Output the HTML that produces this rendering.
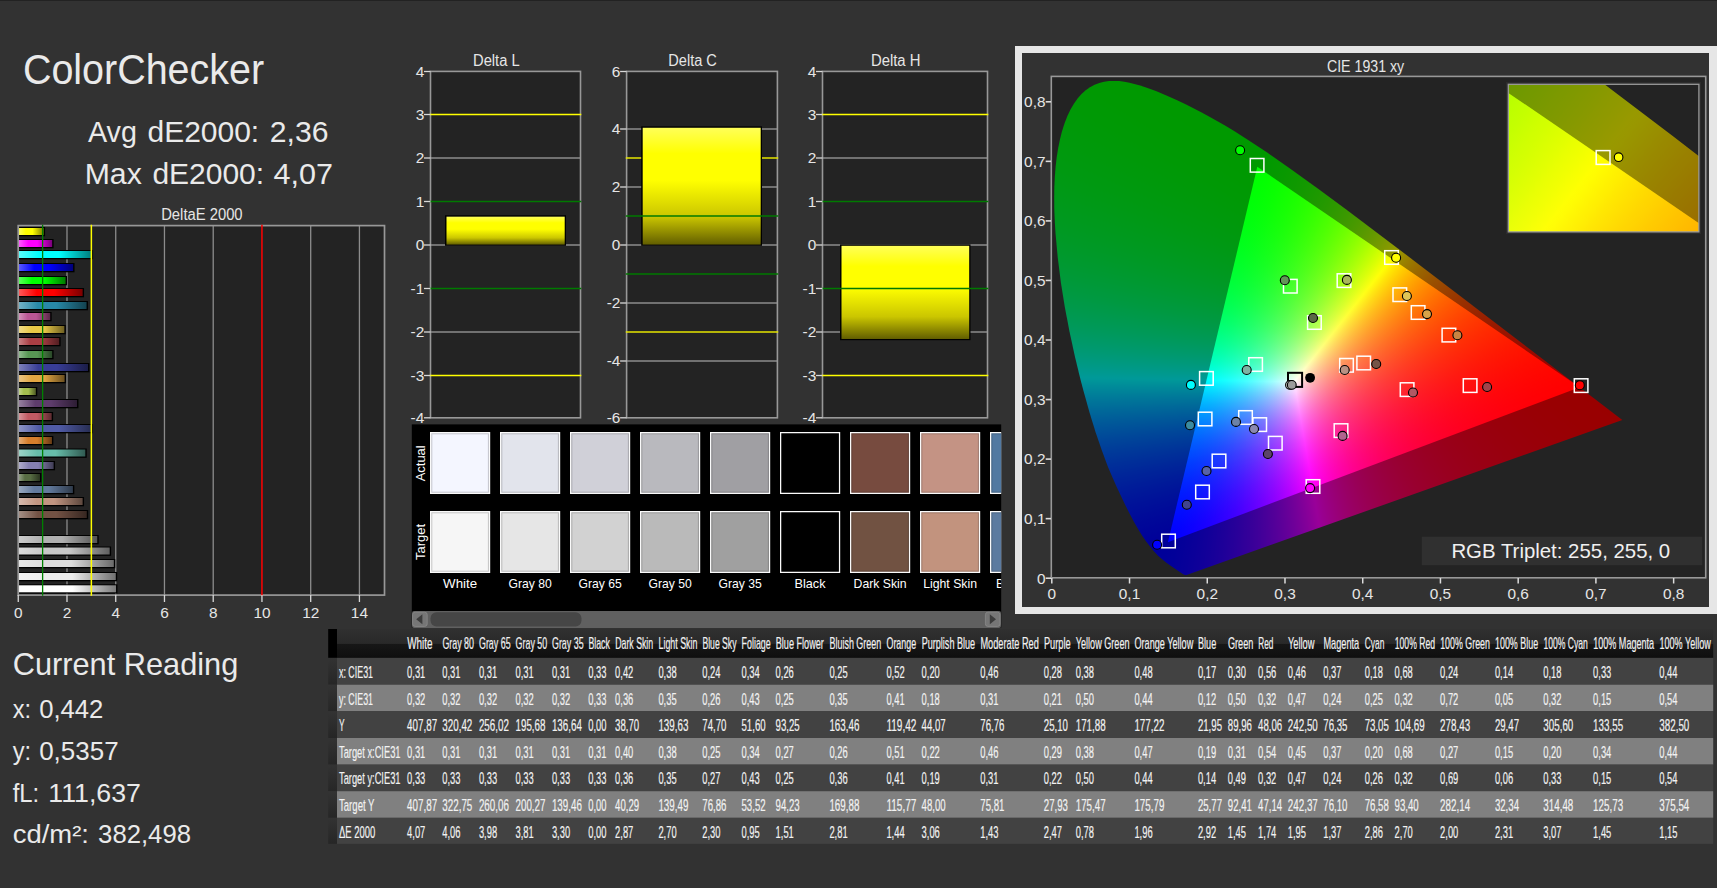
<!DOCTYPE html>
<html><head><meta charset="utf-8"><title>ColorChecker</title>
<style>
html,body{margin:0;padding:0}
body{width:1717px;height:888px;overflow:hidden;background:#323232;position:relative;font-family:"Liberation Sans", sans-serif}
.a{position:absolute}
svg text{font-family:"Liberation Sans", sans-serif}
</style></head><body>
<div class="a" style="left:0;top:0;width:1717px;height:1px;background:#222"></div>
<div class="a" style="left:1015px;top:46px;width:702px;height:568px;box-sizing:border-box;border:7px solid #e6e6e6;border-right-width:8px"></div>
<div class="a" style="left:1051px;top:76px;width:655px;height:502px;background:#232323;overflow:hidden"><div class="a" style="left:0;top:0;width:100%;height:100%;background:conic-gradient(from 0deg at 528.80px 311.28px,#ffff00 0deg,#ffff00 69.3deg,#ff0000 69.4deg,#ff0000 124.3deg,#ff00ff 124.4deg,#ff00ff 249.6deg,#ff01ff 249.8deg,#ff01ff 250deg,#ff02ff 250.2deg,#ff02ff 250.4deg,#ff04ff 250.8deg,#ff06ff 251.3deg,#ff0eff 252.9deg,#ff12ff 253.6deg,#ff15ff 254deg,#ff16ff 254.2deg,#ff19ff 254.6deg,#ff1aff 254.8deg,#ff1fff 255.5deg,#ff23ff 256deg,#ff26ff 256.4deg,#ff28ff 256.6deg,#ff29ff 256.8deg,#ff2eff 257.3deg,#ff2fff 257.5deg,#ff38ff 258.4deg,#ff39ff 258.6deg,#ff43ff 259.6deg,#ff46ff 259.8deg,#ff4fff 260.7deg,#ff52ff 260.9deg,#ff56ff 261.3deg,#ff59ff 261.5deg,#ff5cff 261.8deg,#ff5fff 262deg,#ff61ff 262.2deg,#ff64ff 262.4deg,#ff69ff 262.8deg,#ff6cff 263deg,#ff75ff 263.7deg,#ff8fff 265.4deg,#ff97ff 265.9deg,#ffa3ff 266.6deg,#ffacff 267.1deg,#ffafff 267.3deg,#ffbbff 267.9deg,#ffbeff 268.1deg,#ffd2ff 269.1deg,#ffd7ff 269.3deg,#ffe1ff 269.8deg,#ffe6ff 270deg,#ffeaff 270.2deg,#ffefff 270.4deg,#fffdff 271deg,#fffffe 271.1deg,#fffffa 271.3deg,#fffff5 271.5deg,#ffffec 271.9deg,#ffffe8 272.1deg,#ffffe3 272.3deg,#ffffc9 273.6deg,#ffffc6 273.8deg,#ffffc0 274.1deg,#ffffbd 274.3deg,#ffffb9 274.5deg,#ffffb6 274.7deg,#ffffae 275.2deg,#ffff9c 276.4deg,#ffff95 276.9deg,#ffff8c 277.6deg,#ffff86 278.1deg,#ffff80 278.6deg,#ffff7a 279.1deg,#ffff73 279.8deg,#ffff70 280deg,#ffff67 280.9deg,#ffff66 281.1deg,#ffff5c 282.1deg,#ffff5b 282.3deg,#ffff57 282.7deg,#ffff56 282.9deg,#ffff52 283.3deg,#ffff51 283.5deg,#ffff4f 283.7deg,#ffff4e 283.9deg,#ffff4c 284.1deg,#ffff4b 284.3deg,#ffff49 284.5deg,#ffff48 284.7deg,#ffff44 285.2deg,#ffff43 285.4deg,#ffff3e 286.1deg,#ffff3c 286.5deg,#ffff38 287.1deg,#ffff37 287.3deg,#ffff33 288deg,#ffff23 291.2deg,#ffff20 291.9deg,#ffff1d 292.6deg,#ffff1b 293.1deg,#ffff1a 293.5deg,#ffff18 293.9deg,#ffff17 294.3deg,#ffff16 294.5deg,#ffff15 294.9deg,#ffff14 295.1deg,#ffff13 295.5deg,#ffff12 295.7deg,#ffff11 296.1deg,#ffff10 296.3deg,#ffff0f 296.8deg,#ffff0e 297deg,#ffff0d 297.4deg,#ffff0c 297.8deg,#ffff0b 298.2deg,#ffff0a 298.4deg,#ffff0a 298.6deg,#ffff09 298.8deg,#ffff09 299.1deg,#ffff08 299.3deg,#ffff08 299.5deg,#ffff07 299.7deg,#ffff07 300deg,#ffff06 300.2deg,#ffff06 300.4deg,#ffff05 300.6deg,#ffff05 300.9deg,#ffff04 301.1deg,#ffff04 301.5deg,#ffff03 301.7deg,#ffff03 302.1deg,#ffff02 302.3deg,#ffff02 302.8deg,#ffff01 303deg,#ffff01 303.6deg,#ffff00 303.8deg,#ffff00 360deg),conic-gradient(from 0deg at 206.26px 90.76px,#00ff00 0deg,#00ff00 13.3deg,#ffff00 13.4deg,#ffff00 125.3deg,#ffff01 125.5deg,#ffff01 126.5deg,#ffff02 126.7deg,#ffff02 127.4deg,#ffff03 127.6deg,#ffff03 128.3deg,#ffff04 128.5deg,#ffff04 129.1deg,#ffff05 129.3deg,#ffff05 129.8deg,#ffff06 130deg,#ffff06 130.5deg,#ffff07 130.7deg,#ffff07 131.1deg,#ffff08 131.3deg,#ffff08 131.8deg,#ffff09 132deg,#ffff09 132.3deg,#ffff0a 132.5deg,#ffff0a 132.9deg,#ffff0b 133.1deg,#ffff0b 133.5deg,#ffff0c 133.7deg,#ffff0c 134deg,#ffff0d 134.2deg,#ffff0d 134.5deg,#ffff0e 134.7deg,#ffff0e 135deg,#ffff0f 135.2deg,#ffff0f 135.5deg,#ffff10 135.7deg,#ffff10 136deg,#ffff11 136.2deg,#ffff11 136.5deg,#ffff12 136.7deg,#ffff12 136.9deg,#ffff13 137.1deg,#ffff13 137.4deg,#ffff14 137.6deg,#ffff14 137.8deg,#ffff15 138deg,#ffff15 138.2deg,#ffff16 138.4deg,#ffff16 138.6deg,#ffff17 138.8deg,#ffff17 139deg,#ffff18 139.2deg,#ffff18 139.4deg,#ffff19 139.6deg,#ffff19 139.8deg,#ffff1a 140deg,#ffff1a 140.2deg,#ffff1b 140.4deg,#ffff1c 140.8deg,#ffff1d 141.3deg,#ffff1e 141.5deg,#ffff1f 141.9deg,#ffff20 142.3deg,#ffff21 142.5deg,#ffff22 143deg,#ffff23 143.2deg,#ffff24 143.6deg,#ffff25 143.8deg,#ffff26 144.2deg,#ffff27 144.4deg,#ffff28 144.8deg,#ffff29 145deg,#ffff2b 145.7deg,#ffff2c 145.9deg,#ffff2e 146.4deg,#ffff2f 146.8deg,#ffff31 147.2deg,#ffff33 147.7deg,#ffff35 148.2deg,#ffff37 148.7deg,#ffff3a 149.4deg,#ffff3d 150.1deg,#ffff4e 153.5deg,#ffff52 154.2deg,#ffff56 154.9deg,#ffff59 155.4deg,#ffff5e 156.1deg,#ffff60 156.5deg,#ffff65 157.2deg,#ffff6a 157.9deg,#ffff6e 158.4deg,#ffff6f 158.6deg,#ffff71 158.8deg,#ffff72 159deg,#ffff75 159.3deg,#ffff76 159.5deg,#ffff79 159.8deg,#ffff7a 160deg,#ffff7f 160.5deg,#ffff80 160.7deg,#ffff88 161.5deg,#ffff89 161.7deg,#ffff97 163.1deg,#ffff9a 163.3deg,#ffffa2 164.1deg,#ffffa5 164.3deg,#ffffa9 164.7deg,#ffffac 164.9deg,#ffffae 165.1deg,#ffffb1 165.3deg,#ffffb3 165.5deg,#ffffb6 165.7deg,#ffffbb 166.1deg,#ffffbe 166.3deg,#ffffc8 167deg,#ffffd1 167.6deg,#ffffd9 168.1deg,#ffffe1 168.6deg,#ffffe5 168.8deg,#ffffe8 169deg,#ffffec 169.2deg,#ffffef 169.4deg,#ffffff 170.2deg,#f6ffff 170.7deg,#e6ffff 171.5deg,#e3ffff 171.7deg,#dbffff 172.1deg,#d8ffff 172.3deg,#d4ffff 172.5deg,#d1ffff 172.7deg,#cdffff 172.9deg,#caffff 173.1deg,#c3ffff 173.5deg,#c0ffff 173.7deg,#b9ffff 174.1deg,#b3ffff 174.5deg,#a5ffff 175.4deg,#9fffff 175.8deg,#92ffff 176.7deg,#8bffff 177.2deg,#82ffff 177.9deg,#7fffff 178.1deg,#7affff 178.5deg,#77ffff 178.7deg,#75ffff 178.9deg,#72ffff 179.1deg,#70ffff 179.3deg,#6dffff 179.5deg,#6affff 179.8deg,#67ffff 180deg,#64ffff 180.3deg,#61ffff 180.5deg,#5cffff 181deg,#59ffff 181.2deg,#4fffff 182.2deg,#4cffff 182.4deg,#3dffff 183.9deg,#3cffff 184.1deg,#32ffff 185.1deg,#31ffff 185.3deg,#2cffff 185.8deg,#2bffff 186deg,#27ffff 186.4deg,#26ffff 186.6deg,#23ffff 186.9deg,#22ffff 187.1deg,#20ffff 187.3deg,#1fffff 187.5deg,#1dffff 187.7deg,#1cffff 187.9deg,#18ffff 188.4deg,#17ffff 188.6deg,#13ffff 189.2deg,#12ffff 189.4deg,#0effff 190deg,#0cffff 190.4deg,#05ffff 191.8deg,#03ffff 192.3deg,#02ffff 192.7deg,#01ffff 192.9deg,#00ffff 193.4deg,#00ffff 304.3deg,#00ff00 304.4deg,#00ff00 360deg),conic-gradient(from 0deg at 116.88px 466.24px,#00ffff 0deg,#00ffff 13.7deg,#01ffff 13.9deg,#01ffff 14.2deg,#02ffff 14.4deg,#02ffff 14.6deg,#03ffff 14.8deg,#05ffff 15.5deg,#06ffff 15.7deg,#08ffff 16.3deg,#09ffff 16.5deg,#0bffff 17deg,#18ffff 19.6deg,#1bffff 20.1deg,#1effff 20.6deg,#21ffff 21.1deg,#24ffff 21.5deg,#25ffff 21.7deg,#28ffff 22.1deg,#2bffff 22.5deg,#2cffff 22.7deg,#2effff 22.9deg,#2fffff 23.1deg,#31ffff 23.3deg,#32ffff 23.5deg,#35ffff 23.8deg,#36ffff 24deg,#39ffff 24.3deg,#3affff 24.5deg,#3fffff 25deg,#40ffff 25.2deg,#49ffff 26.1deg,#4affff 26.3deg,#59ffff 27.8deg,#5cffff 28deg,#64ffff 28.8deg,#67ffff 29deg,#6bffff 29.4deg,#6effff 29.6deg,#71ffff 29.9deg,#74ffff 30.1deg,#76ffff 30.3deg,#79ffff 30.5deg,#7fffff 31deg,#85ffff 31.4deg,#8dffff 32deg,#93ffff 32.4deg,#9cffff 33deg,#a7ffff 33.7deg,#aeffff 34.1deg,#b1ffff 34.3deg,#b8ffff 34.7deg,#c1ffff 35.2deg,#c4ffff 35.4deg,#d0ffff 36deg,#d3ffff 36.2deg,#e3ffff 37deg,#e8ffff 37.2deg,#f2ffff 37.7deg,#f7ffff 37.9deg,#fbffff 38.1deg,#feffff 38.2deg,#fffcff 38.4deg,#fff1ff 38.9deg,#ffedff 39.1deg,#ffe8ff 39.3deg,#ffd6ff 40.2deg,#ffd3ff 40.4deg,#ffcbff 40.8deg,#ffc8ff 41deg,#ffc4ff 41.2deg,#ffc1ff 41.4deg,#ffbdff 41.6deg,#ffbaff 41.8deg,#ffb2ff 42.3deg,#ffa0ff 43.5deg,#ff99ff 44deg,#ff90ff 44.7deg,#ff8dff 44.9deg,#ff8bff 45.1deg,#ff88ff 45.3deg,#ff86ff 45.5deg,#ff83ff 45.7deg,#ff7fff 46.1deg,#ff7cff 46.3deg,#ff76ff 46.9deg,#ff73ff 47.1deg,#ff5fff 49.1deg,#ff5eff 49.3deg,#ff57ff 50deg,#ff56ff 50.2deg,#ff52ff 50.6deg,#ff51ff 50.8deg,#ff4eff 51.1deg,#ff4dff 51.3deg,#ff4aff 51.6deg,#ff49ff 51.8deg,#ff47ff 52deg,#ff46ff 52.2deg,#ff44ff 52.4deg,#ff43ff 52.6deg,#ff3fff 53.1deg,#ff3eff 53.3deg,#ff3bff 53.7deg,#ff3aff 53.9deg,#ff36ff 54.5deg,#ff35ff 54.7deg,#ff32ff 55.2deg,#ff2fff 55.7deg,#ff2bff 56.4deg,#ff1eff 59deg,#ff1aff 59.9deg,#ff18ff 60.4deg,#ff16ff 60.9deg,#ff14ff 61.4deg,#ff13ff 61.8deg,#ff11ff 62.2deg,#ff10ff 62.6deg,#ff0fff 62.8deg,#ff0eff 63.2deg,#ff0dff 63.4deg,#ff0bff 64.1deg,#ff0aff 64.5deg,#ff09ff 64.7deg,#ff09ff 64.9deg,#ff08ff 65.1deg,#ff08ff 65.3deg,#ff07ff 65.5deg,#ff06ff 65.9deg,#ff06ff 66.1deg,#ff05ff 66.3deg,#ff05ff 66.5deg,#ff04ff 66.7deg,#ff04ff 67deg,#ff03ff 67.2deg,#ff03ff 67.5deg,#ff02ff 67.7deg,#ff02ff 68deg,#ff01ff 68.2deg,#ff01ff 68.8deg,#ff00ff 69deg,#ff00ff 193.3deg,#0000ff 193.4deg,#0000ff 249.3deg,#00ffff 249.4deg,#00ffff 360deg);background-blend-mode:darken;clip-path:polygon(135.6px 499.0px,134.0px 499.1px,132.2px 498.3px,120.0px 490.1px,115.1px 486.5px,110.2px 482.6px,106.8px 479.5px,102.9px 475.3px,100.0px 471.7px,95.0px 465.2px,91.4px 459.9px,87.5px 453.7px,83.3px 446.5px,78.8px 438.1px,73.9px 428.3px,65.7px 411.0px,59.8px 397.5px,56.7px 390.2px,50.7px 374.1px,44.6px 356.3px,38.6px 336.7px,32.6px 315.3px,29.6px 304.0px,23.9px 280.5px,18.6px 256.0px,13.8px 231.0px,9.8px 205.9px,6.7px 181.1px,4.5px 157.0px,3.8px 145.3px,3.3px 133.8px,3.2px 122.6px,3.3px 111.7px,3.8px 101.2px,4.6px 91.0px,5.7px 81.3px,7.2px 72.0px,9.0px 63.2px,11.1px 54.9px,13.6px 47.2px,16.4px 40.0px,19.5px 33.6px,22.9px 27.7px,26.6px 22.5px,30.5px 18.0px,34.7px 14.3px,39.0px 11.2px,43.6px 8.8px,48.3px 7.0px,53.1px 5.7px,58.0px 5.1px,63.1px 4.9px,68.2px 5.1px,73.3px 5.8px,78.5px 6.8px,89.1px 9.6px,94.3px 11.3px,104.9px 15.1px,115.4px 19.4px,125.6px 24.0px,135.6px 28.7px,150.2px 36.2px,159.8px 41.4px,174.0px 49.6px,183.5px 55.3px,197.5px 64.2px,216.2px 76.6px,239.3px 92.7px,267.1px 112.7px,294.9px 133.3px,354.5px 178.3px,571.3px 343.9px);filter:brightness(.6)"></div><div class="a" style="left:0;top:0;width:100%;height:100%;background:conic-gradient(from 0deg at 528.80px 311.28px,#ffff00 0deg,#ffff00 69.3deg,#ff0000 69.4deg,#ff0000 124.3deg,#ff00ff 124.4deg,#ff00ff 249.6deg,#ff01ff 249.8deg,#ff01ff 250deg,#ff02ff 250.2deg,#ff02ff 250.4deg,#ff04ff 250.8deg,#ff06ff 251.3deg,#ff0eff 252.9deg,#ff12ff 253.6deg,#ff15ff 254deg,#ff16ff 254.2deg,#ff19ff 254.6deg,#ff1aff 254.8deg,#ff1fff 255.5deg,#ff23ff 256deg,#ff26ff 256.4deg,#ff28ff 256.6deg,#ff29ff 256.8deg,#ff2eff 257.3deg,#ff2fff 257.5deg,#ff38ff 258.4deg,#ff39ff 258.6deg,#ff43ff 259.6deg,#ff46ff 259.8deg,#ff4fff 260.7deg,#ff52ff 260.9deg,#ff56ff 261.3deg,#ff59ff 261.5deg,#ff5cff 261.8deg,#ff5fff 262deg,#ff61ff 262.2deg,#ff64ff 262.4deg,#ff69ff 262.8deg,#ff6cff 263deg,#ff75ff 263.7deg,#ff8fff 265.4deg,#ff97ff 265.9deg,#ffa3ff 266.6deg,#ffacff 267.1deg,#ffafff 267.3deg,#ffbbff 267.9deg,#ffbeff 268.1deg,#ffd2ff 269.1deg,#ffd7ff 269.3deg,#ffe1ff 269.8deg,#ffe6ff 270deg,#ffeaff 270.2deg,#ffefff 270.4deg,#fffdff 271deg,#fffffe 271.1deg,#fffffa 271.3deg,#fffff5 271.5deg,#ffffec 271.9deg,#ffffe8 272.1deg,#ffffe3 272.3deg,#ffffc9 273.6deg,#ffffc6 273.8deg,#ffffc0 274.1deg,#ffffbd 274.3deg,#ffffb9 274.5deg,#ffffb6 274.7deg,#ffffae 275.2deg,#ffff9c 276.4deg,#ffff95 276.9deg,#ffff8c 277.6deg,#ffff86 278.1deg,#ffff80 278.6deg,#ffff7a 279.1deg,#ffff73 279.8deg,#ffff70 280deg,#ffff67 280.9deg,#ffff66 281.1deg,#ffff5c 282.1deg,#ffff5b 282.3deg,#ffff57 282.7deg,#ffff56 282.9deg,#ffff52 283.3deg,#ffff51 283.5deg,#ffff4f 283.7deg,#ffff4e 283.9deg,#ffff4c 284.1deg,#ffff4b 284.3deg,#ffff49 284.5deg,#ffff48 284.7deg,#ffff44 285.2deg,#ffff43 285.4deg,#ffff3e 286.1deg,#ffff3c 286.5deg,#ffff38 287.1deg,#ffff37 287.3deg,#ffff33 288deg,#ffff23 291.2deg,#ffff20 291.9deg,#ffff1d 292.6deg,#ffff1b 293.1deg,#ffff1a 293.5deg,#ffff18 293.9deg,#ffff17 294.3deg,#ffff16 294.5deg,#ffff15 294.9deg,#ffff14 295.1deg,#ffff13 295.5deg,#ffff12 295.7deg,#ffff11 296.1deg,#ffff10 296.3deg,#ffff0f 296.8deg,#ffff0e 297deg,#ffff0d 297.4deg,#ffff0c 297.8deg,#ffff0b 298.2deg,#ffff0a 298.4deg,#ffff0a 298.6deg,#ffff09 298.8deg,#ffff09 299.1deg,#ffff08 299.3deg,#ffff08 299.5deg,#ffff07 299.7deg,#ffff07 300deg,#ffff06 300.2deg,#ffff06 300.4deg,#ffff05 300.6deg,#ffff05 300.9deg,#ffff04 301.1deg,#ffff04 301.5deg,#ffff03 301.7deg,#ffff03 302.1deg,#ffff02 302.3deg,#ffff02 302.8deg,#ffff01 303deg,#ffff01 303.6deg,#ffff00 303.8deg,#ffff00 360deg),conic-gradient(from 0deg at 206.26px 90.76px,#00ff00 0deg,#00ff00 13.3deg,#ffff00 13.4deg,#ffff00 125.3deg,#ffff01 125.5deg,#ffff01 126.5deg,#ffff02 126.7deg,#ffff02 127.4deg,#ffff03 127.6deg,#ffff03 128.3deg,#ffff04 128.5deg,#ffff04 129.1deg,#ffff05 129.3deg,#ffff05 129.8deg,#ffff06 130deg,#ffff06 130.5deg,#ffff07 130.7deg,#ffff07 131.1deg,#ffff08 131.3deg,#ffff08 131.8deg,#ffff09 132deg,#ffff09 132.3deg,#ffff0a 132.5deg,#ffff0a 132.9deg,#ffff0b 133.1deg,#ffff0b 133.5deg,#ffff0c 133.7deg,#ffff0c 134deg,#ffff0d 134.2deg,#ffff0d 134.5deg,#ffff0e 134.7deg,#ffff0e 135deg,#ffff0f 135.2deg,#ffff0f 135.5deg,#ffff10 135.7deg,#ffff10 136deg,#ffff11 136.2deg,#ffff11 136.5deg,#ffff12 136.7deg,#ffff12 136.9deg,#ffff13 137.1deg,#ffff13 137.4deg,#ffff14 137.6deg,#ffff14 137.8deg,#ffff15 138deg,#ffff15 138.2deg,#ffff16 138.4deg,#ffff16 138.6deg,#ffff17 138.8deg,#ffff17 139deg,#ffff18 139.2deg,#ffff18 139.4deg,#ffff19 139.6deg,#ffff19 139.8deg,#ffff1a 140deg,#ffff1a 140.2deg,#ffff1b 140.4deg,#ffff1c 140.8deg,#ffff1d 141.3deg,#ffff1e 141.5deg,#ffff1f 141.9deg,#ffff20 142.3deg,#ffff21 142.5deg,#ffff22 143deg,#ffff23 143.2deg,#ffff24 143.6deg,#ffff25 143.8deg,#ffff26 144.2deg,#ffff27 144.4deg,#ffff28 144.8deg,#ffff29 145deg,#ffff2b 145.7deg,#ffff2c 145.9deg,#ffff2e 146.4deg,#ffff2f 146.8deg,#ffff31 147.2deg,#ffff33 147.7deg,#ffff35 148.2deg,#ffff37 148.7deg,#ffff3a 149.4deg,#ffff3d 150.1deg,#ffff4e 153.5deg,#ffff52 154.2deg,#ffff56 154.9deg,#ffff59 155.4deg,#ffff5e 156.1deg,#ffff60 156.5deg,#ffff65 157.2deg,#ffff6a 157.9deg,#ffff6e 158.4deg,#ffff6f 158.6deg,#ffff71 158.8deg,#ffff72 159deg,#ffff75 159.3deg,#ffff76 159.5deg,#ffff79 159.8deg,#ffff7a 160deg,#ffff7f 160.5deg,#ffff80 160.7deg,#ffff88 161.5deg,#ffff89 161.7deg,#ffff97 163.1deg,#ffff9a 163.3deg,#ffffa2 164.1deg,#ffffa5 164.3deg,#ffffa9 164.7deg,#ffffac 164.9deg,#ffffae 165.1deg,#ffffb1 165.3deg,#ffffb3 165.5deg,#ffffb6 165.7deg,#ffffbb 166.1deg,#ffffbe 166.3deg,#ffffc8 167deg,#ffffd1 167.6deg,#ffffd9 168.1deg,#ffffe1 168.6deg,#ffffe5 168.8deg,#ffffe8 169deg,#ffffec 169.2deg,#ffffef 169.4deg,#ffffff 170.2deg,#f6ffff 170.7deg,#e6ffff 171.5deg,#e3ffff 171.7deg,#dbffff 172.1deg,#d8ffff 172.3deg,#d4ffff 172.5deg,#d1ffff 172.7deg,#cdffff 172.9deg,#caffff 173.1deg,#c3ffff 173.5deg,#c0ffff 173.7deg,#b9ffff 174.1deg,#b3ffff 174.5deg,#a5ffff 175.4deg,#9fffff 175.8deg,#92ffff 176.7deg,#8bffff 177.2deg,#82ffff 177.9deg,#7fffff 178.1deg,#7affff 178.5deg,#77ffff 178.7deg,#75ffff 178.9deg,#72ffff 179.1deg,#70ffff 179.3deg,#6dffff 179.5deg,#6affff 179.8deg,#67ffff 180deg,#64ffff 180.3deg,#61ffff 180.5deg,#5cffff 181deg,#59ffff 181.2deg,#4fffff 182.2deg,#4cffff 182.4deg,#3dffff 183.9deg,#3cffff 184.1deg,#32ffff 185.1deg,#31ffff 185.3deg,#2cffff 185.8deg,#2bffff 186deg,#27ffff 186.4deg,#26ffff 186.6deg,#23ffff 186.9deg,#22ffff 187.1deg,#20ffff 187.3deg,#1fffff 187.5deg,#1dffff 187.7deg,#1cffff 187.9deg,#18ffff 188.4deg,#17ffff 188.6deg,#13ffff 189.2deg,#12ffff 189.4deg,#0effff 190deg,#0cffff 190.4deg,#05ffff 191.8deg,#03ffff 192.3deg,#02ffff 192.7deg,#01ffff 192.9deg,#00ffff 193.4deg,#00ffff 304.3deg,#00ff00 304.4deg,#00ff00 360deg),conic-gradient(from 0deg at 116.88px 466.24px,#00ffff 0deg,#00ffff 13.7deg,#01ffff 13.9deg,#01ffff 14.2deg,#02ffff 14.4deg,#02ffff 14.6deg,#03ffff 14.8deg,#05ffff 15.5deg,#06ffff 15.7deg,#08ffff 16.3deg,#09ffff 16.5deg,#0bffff 17deg,#18ffff 19.6deg,#1bffff 20.1deg,#1effff 20.6deg,#21ffff 21.1deg,#24ffff 21.5deg,#25ffff 21.7deg,#28ffff 22.1deg,#2bffff 22.5deg,#2cffff 22.7deg,#2effff 22.9deg,#2fffff 23.1deg,#31ffff 23.3deg,#32ffff 23.5deg,#35ffff 23.8deg,#36ffff 24deg,#39ffff 24.3deg,#3affff 24.5deg,#3fffff 25deg,#40ffff 25.2deg,#49ffff 26.1deg,#4affff 26.3deg,#59ffff 27.8deg,#5cffff 28deg,#64ffff 28.8deg,#67ffff 29deg,#6bffff 29.4deg,#6effff 29.6deg,#71ffff 29.9deg,#74ffff 30.1deg,#76ffff 30.3deg,#79ffff 30.5deg,#7fffff 31deg,#85ffff 31.4deg,#8dffff 32deg,#93ffff 32.4deg,#9cffff 33deg,#a7ffff 33.7deg,#aeffff 34.1deg,#b1ffff 34.3deg,#b8ffff 34.7deg,#c1ffff 35.2deg,#c4ffff 35.4deg,#d0ffff 36deg,#d3ffff 36.2deg,#e3ffff 37deg,#e8ffff 37.2deg,#f2ffff 37.7deg,#f7ffff 37.9deg,#fbffff 38.1deg,#feffff 38.2deg,#fffcff 38.4deg,#fff1ff 38.9deg,#ffedff 39.1deg,#ffe8ff 39.3deg,#ffd6ff 40.2deg,#ffd3ff 40.4deg,#ffcbff 40.8deg,#ffc8ff 41deg,#ffc4ff 41.2deg,#ffc1ff 41.4deg,#ffbdff 41.6deg,#ffbaff 41.8deg,#ffb2ff 42.3deg,#ffa0ff 43.5deg,#ff99ff 44deg,#ff90ff 44.7deg,#ff8dff 44.9deg,#ff8bff 45.1deg,#ff88ff 45.3deg,#ff86ff 45.5deg,#ff83ff 45.7deg,#ff7fff 46.1deg,#ff7cff 46.3deg,#ff76ff 46.9deg,#ff73ff 47.1deg,#ff5fff 49.1deg,#ff5eff 49.3deg,#ff57ff 50deg,#ff56ff 50.2deg,#ff52ff 50.6deg,#ff51ff 50.8deg,#ff4eff 51.1deg,#ff4dff 51.3deg,#ff4aff 51.6deg,#ff49ff 51.8deg,#ff47ff 52deg,#ff46ff 52.2deg,#ff44ff 52.4deg,#ff43ff 52.6deg,#ff3fff 53.1deg,#ff3eff 53.3deg,#ff3bff 53.7deg,#ff3aff 53.9deg,#ff36ff 54.5deg,#ff35ff 54.7deg,#ff32ff 55.2deg,#ff2fff 55.7deg,#ff2bff 56.4deg,#ff1eff 59deg,#ff1aff 59.9deg,#ff18ff 60.4deg,#ff16ff 60.9deg,#ff14ff 61.4deg,#ff13ff 61.8deg,#ff11ff 62.2deg,#ff10ff 62.6deg,#ff0fff 62.8deg,#ff0eff 63.2deg,#ff0dff 63.4deg,#ff0bff 64.1deg,#ff0aff 64.5deg,#ff09ff 64.7deg,#ff09ff 64.9deg,#ff08ff 65.1deg,#ff08ff 65.3deg,#ff07ff 65.5deg,#ff06ff 65.9deg,#ff06ff 66.1deg,#ff05ff 66.3deg,#ff05ff 66.5deg,#ff04ff 66.7deg,#ff04ff 67deg,#ff03ff 67.2deg,#ff03ff 67.5deg,#ff02ff 67.7deg,#ff02ff 68deg,#ff01ff 68.2deg,#ff01ff 68.8deg,#ff00ff 69deg,#ff00ff 193.3deg,#0000ff 193.4deg,#0000ff 249.3deg,#00ffff 249.4deg,#00ffff 360deg);background-blend-mode:darken;clip-path:polygon(528.8px 311.3px,206.3px 90.8px,116.9px 466.2px)"></div></div>
<div class="a" style="left:1508px;top:84px;width:191px;height:148px;background:#232323;overflow:hidden;outline:2.5px solid #2c2c2c"><div class="a" style="left:0;top:0;width:100%;height:100%;background:conic-gradient(from 0deg at 1035.80px 716.78px,#ffff00 0deg,#ffff00 69.3deg,#ff0000 69.4deg,#ff0000 124.3deg,#ff00ff 124.4deg,#ff00ff 249.6deg,#ff01ff 249.8deg,#ff01ff 250deg,#ff02ff 250.2deg,#ff02ff 250.4deg,#ff04ff 250.8deg,#ff06ff 251.3deg,#ff0eff 252.9deg,#ff12ff 253.6deg,#ff15ff 254deg,#ff16ff 254.2deg,#ff19ff 254.6deg,#ff1aff 254.8deg,#ff1fff 255.5deg,#ff23ff 256deg,#ff26ff 256.4deg,#ff28ff 256.6deg,#ff29ff 256.8deg,#ff2eff 257.3deg,#ff2fff 257.5deg,#ff38ff 258.4deg,#ff39ff 258.6deg,#ff43ff 259.6deg,#ff46ff 259.8deg,#ff4fff 260.7deg,#ff52ff 260.9deg,#ff56ff 261.3deg,#ff59ff 261.5deg,#ff5cff 261.8deg,#ff5fff 262deg,#ff61ff 262.2deg,#ff64ff 262.4deg,#ff69ff 262.8deg,#ff6cff 263deg,#ff75ff 263.7deg,#ff8fff 265.4deg,#ff97ff 265.9deg,#ffa3ff 266.6deg,#ffacff 267.1deg,#ffafff 267.3deg,#ffbbff 267.9deg,#ffbeff 268.1deg,#ffd2ff 269.1deg,#ffd7ff 269.3deg,#ffe1ff 269.8deg,#ffe6ff 270deg,#ffeaff 270.2deg,#ffefff 270.4deg,#fffdff 271deg,#fffffe 271.1deg,#fffffa 271.3deg,#fffff5 271.5deg,#ffffec 271.9deg,#ffffe8 272.1deg,#ffffe3 272.3deg,#ffffc9 273.6deg,#ffffc6 273.8deg,#ffffc0 274.1deg,#ffffbd 274.3deg,#ffffb9 274.5deg,#ffffb6 274.7deg,#ffffae 275.2deg,#ffff9c 276.4deg,#ffff95 276.9deg,#ffff8c 277.6deg,#ffff86 278.1deg,#ffff80 278.6deg,#ffff7a 279.1deg,#ffff73 279.8deg,#ffff70 280deg,#ffff67 280.9deg,#ffff66 281.1deg,#ffff5c 282.1deg,#ffff5b 282.3deg,#ffff57 282.7deg,#ffff56 282.9deg,#ffff52 283.3deg,#ffff51 283.5deg,#ffff4f 283.7deg,#ffff4e 283.9deg,#ffff4c 284.1deg,#ffff4b 284.3deg,#ffff49 284.5deg,#ffff48 284.7deg,#ffff44 285.2deg,#ffff43 285.4deg,#ffff3e 286.1deg,#ffff3c 286.5deg,#ffff38 287.1deg,#ffff37 287.3deg,#ffff33 288deg,#ffff23 291.2deg,#ffff20 291.9deg,#ffff1d 292.6deg,#ffff1b 293.1deg,#ffff1a 293.5deg,#ffff18 293.9deg,#ffff17 294.3deg,#ffff16 294.5deg,#ffff15 294.9deg,#ffff14 295.1deg,#ffff13 295.5deg,#ffff12 295.7deg,#ffff11 296.1deg,#ffff10 296.3deg,#ffff0f 296.8deg,#ffff0e 297deg,#ffff0d 297.4deg,#ffff0c 297.8deg,#ffff0b 298.2deg,#ffff0a 298.4deg,#ffff0a 298.6deg,#ffff09 298.8deg,#ffff09 299.1deg,#ffff08 299.3deg,#ffff08 299.5deg,#ffff07 299.7deg,#ffff07 300deg,#ffff06 300.2deg,#ffff06 300.4deg,#ffff05 300.6deg,#ffff05 300.9deg,#ffff04 301.1deg,#ffff04 301.5deg,#ffff03 301.7deg,#ffff03 302.1deg,#ffff02 302.3deg,#ffff02 302.8deg,#ffff01 303deg,#ffff01 303.6deg,#ffff00 303.8deg,#ffff00 360deg),conic-gradient(from 0deg at -576.89px -385.82px,#00ff00 0deg,#00ff00 13.3deg,#ffff00 13.4deg,#ffff00 125.3deg,#ffff01 125.5deg,#ffff01 126.5deg,#ffff02 126.7deg,#ffff02 127.4deg,#ffff03 127.6deg,#ffff03 128.3deg,#ffff04 128.5deg,#ffff04 129.1deg,#ffff05 129.3deg,#ffff05 129.8deg,#ffff06 130deg,#ffff06 130.5deg,#ffff07 130.7deg,#ffff07 131.1deg,#ffff08 131.3deg,#ffff08 131.8deg,#ffff09 132deg,#ffff09 132.3deg,#ffff0a 132.5deg,#ffff0a 132.9deg,#ffff0b 133.1deg,#ffff0b 133.5deg,#ffff0c 133.7deg,#ffff0c 134deg,#ffff0d 134.2deg,#ffff0d 134.5deg,#ffff0e 134.7deg,#ffff0e 135deg,#ffff0f 135.2deg,#ffff0f 135.5deg,#ffff10 135.7deg,#ffff10 136deg,#ffff11 136.2deg,#ffff11 136.5deg,#ffff12 136.7deg,#ffff12 136.9deg,#ffff13 137.1deg,#ffff13 137.4deg,#ffff14 137.6deg,#ffff14 137.8deg,#ffff15 138deg,#ffff15 138.2deg,#ffff16 138.4deg,#ffff16 138.6deg,#ffff17 138.8deg,#ffff17 139deg,#ffff18 139.2deg,#ffff18 139.4deg,#ffff19 139.6deg,#ffff19 139.8deg,#ffff1a 140deg,#ffff1a 140.2deg,#ffff1b 140.4deg,#ffff1c 140.8deg,#ffff1d 141.3deg,#ffff1e 141.5deg,#ffff1f 141.9deg,#ffff20 142.3deg,#ffff21 142.5deg,#ffff22 143deg,#ffff23 143.2deg,#ffff24 143.6deg,#ffff25 143.8deg,#ffff26 144.2deg,#ffff27 144.4deg,#ffff28 144.8deg,#ffff29 145deg,#ffff2b 145.7deg,#ffff2c 145.9deg,#ffff2e 146.4deg,#ffff2f 146.8deg,#ffff31 147.2deg,#ffff33 147.7deg,#ffff35 148.2deg,#ffff37 148.7deg,#ffff3a 149.4deg,#ffff3d 150.1deg,#ffff4e 153.5deg,#ffff52 154.2deg,#ffff56 154.9deg,#ffff59 155.4deg,#ffff5e 156.1deg,#ffff60 156.5deg,#ffff65 157.2deg,#ffff6a 157.9deg,#ffff6e 158.4deg,#ffff6f 158.6deg,#ffff71 158.8deg,#ffff72 159deg,#ffff75 159.3deg,#ffff76 159.5deg,#ffff79 159.8deg,#ffff7a 160deg,#ffff7f 160.5deg,#ffff80 160.7deg,#ffff88 161.5deg,#ffff89 161.7deg,#ffff97 163.1deg,#ffff9a 163.3deg,#ffffa2 164.1deg,#ffffa5 164.3deg,#ffffa9 164.7deg,#ffffac 164.9deg,#ffffae 165.1deg,#ffffb1 165.3deg,#ffffb3 165.5deg,#ffffb6 165.7deg,#ffffbb 166.1deg,#ffffbe 166.3deg,#ffffc8 167deg,#ffffd1 167.6deg,#ffffd9 168.1deg,#ffffe1 168.6deg,#ffffe5 168.8deg,#ffffe8 169deg,#ffffec 169.2deg,#ffffef 169.4deg,#ffffff 170.2deg,#f6ffff 170.7deg,#e6ffff 171.5deg,#e3ffff 171.7deg,#dbffff 172.1deg,#d8ffff 172.3deg,#d4ffff 172.5deg,#d1ffff 172.7deg,#cdffff 172.9deg,#caffff 173.1deg,#c3ffff 173.5deg,#c0ffff 173.7deg,#b9ffff 174.1deg,#b3ffff 174.5deg,#a5ffff 175.4deg,#9fffff 175.8deg,#92ffff 176.7deg,#8bffff 177.2deg,#82ffff 177.9deg,#7fffff 178.1deg,#7affff 178.5deg,#77ffff 178.7deg,#75ffff 178.9deg,#72ffff 179.1deg,#70ffff 179.3deg,#6dffff 179.5deg,#6affff 179.8deg,#67ffff 180deg,#64ffff 180.3deg,#61ffff 180.5deg,#5cffff 181deg,#59ffff 181.2deg,#4fffff 182.2deg,#4cffff 182.4deg,#3dffff 183.9deg,#3cffff 184.1deg,#32ffff 185.1deg,#31ffff 185.3deg,#2cffff 185.8deg,#2bffff 186deg,#27ffff 186.4deg,#26ffff 186.6deg,#23ffff 186.9deg,#22ffff 187.1deg,#20ffff 187.3deg,#1fffff 187.5deg,#1dffff 187.7deg,#1cffff 187.9deg,#18ffff 188.4deg,#17ffff 188.6deg,#13ffff 189.2deg,#12ffff 189.4deg,#0effff 190deg,#0cffff 190.4deg,#05ffff 191.8deg,#03ffff 192.3deg,#02ffff 192.7deg,#01ffff 192.9deg,#00ffff 193.4deg,#00ffff 304.3deg,#00ff00 304.4deg,#00ff00 360deg),conic-gradient(from 0deg at -1023.78px 1491.58px,#00ffff 0deg,#00ffff 13.7deg,#01ffff 13.9deg,#01ffff 14.2deg,#02ffff 14.4deg,#02ffff 14.6deg,#03ffff 14.8deg,#05ffff 15.5deg,#06ffff 15.7deg,#08ffff 16.3deg,#09ffff 16.5deg,#0bffff 17deg,#18ffff 19.6deg,#1bffff 20.1deg,#1effff 20.6deg,#21ffff 21.1deg,#24ffff 21.5deg,#25ffff 21.7deg,#28ffff 22.1deg,#2bffff 22.5deg,#2cffff 22.7deg,#2effff 22.9deg,#2fffff 23.1deg,#31ffff 23.3deg,#32ffff 23.5deg,#35ffff 23.8deg,#36ffff 24deg,#39ffff 24.3deg,#3affff 24.5deg,#3fffff 25deg,#40ffff 25.2deg,#49ffff 26.1deg,#4affff 26.3deg,#59ffff 27.8deg,#5cffff 28deg,#64ffff 28.8deg,#67ffff 29deg,#6bffff 29.4deg,#6effff 29.6deg,#71ffff 29.9deg,#74ffff 30.1deg,#76ffff 30.3deg,#79ffff 30.5deg,#7fffff 31deg,#85ffff 31.4deg,#8dffff 32deg,#93ffff 32.4deg,#9cffff 33deg,#a7ffff 33.7deg,#aeffff 34.1deg,#b1ffff 34.3deg,#b8ffff 34.7deg,#c1ffff 35.2deg,#c4ffff 35.4deg,#d0ffff 36deg,#d3ffff 36.2deg,#e3ffff 37deg,#e8ffff 37.2deg,#f2ffff 37.7deg,#f7ffff 37.9deg,#fbffff 38.1deg,#feffff 38.2deg,#fffcff 38.4deg,#fff1ff 38.9deg,#ffedff 39.1deg,#ffe8ff 39.3deg,#ffd6ff 40.2deg,#ffd3ff 40.4deg,#ffcbff 40.8deg,#ffc8ff 41deg,#ffc4ff 41.2deg,#ffc1ff 41.4deg,#ffbdff 41.6deg,#ffbaff 41.8deg,#ffb2ff 42.3deg,#ffa0ff 43.5deg,#ff99ff 44deg,#ff90ff 44.7deg,#ff8dff 44.9deg,#ff8bff 45.1deg,#ff88ff 45.3deg,#ff86ff 45.5deg,#ff83ff 45.7deg,#ff7fff 46.1deg,#ff7cff 46.3deg,#ff76ff 46.9deg,#ff73ff 47.1deg,#ff5fff 49.1deg,#ff5eff 49.3deg,#ff57ff 50deg,#ff56ff 50.2deg,#ff52ff 50.6deg,#ff51ff 50.8deg,#ff4eff 51.1deg,#ff4dff 51.3deg,#ff4aff 51.6deg,#ff49ff 51.8deg,#ff47ff 52deg,#ff46ff 52.2deg,#ff44ff 52.4deg,#ff43ff 52.6deg,#ff3fff 53.1deg,#ff3eff 53.3deg,#ff3bff 53.7deg,#ff3aff 53.9deg,#ff36ff 54.5deg,#ff35ff 54.7deg,#ff32ff 55.2deg,#ff2fff 55.7deg,#ff2bff 56.4deg,#ff1eff 59deg,#ff1aff 59.9deg,#ff18ff 60.4deg,#ff16ff 60.9deg,#ff14ff 61.4deg,#ff13ff 61.8deg,#ff11ff 62.2deg,#ff10ff 62.6deg,#ff0fff 62.8deg,#ff0eff 63.2deg,#ff0dff 63.4deg,#ff0bff 64.1deg,#ff0aff 64.5deg,#ff09ff 64.7deg,#ff09ff 64.9deg,#ff08ff 65.1deg,#ff08ff 65.3deg,#ff07ff 65.5deg,#ff06ff 65.9deg,#ff06ff 66.1deg,#ff05ff 66.3deg,#ff05ff 66.5deg,#ff04ff 66.7deg,#ff04ff 67deg,#ff03ff 67.2deg,#ff03ff 67.5deg,#ff02ff 67.7deg,#ff02ff 68deg,#ff01ff 68.2deg,#ff01ff 68.8deg,#ff00ff 69deg,#ff00ff 193.3deg,#0000ff 193.4deg,#0000ff 249.3deg,#00ffff 249.4deg,#00ffff 360deg);background-blend-mode:darken;clip-path:polygon(-930.1px 1655.5px,-933.4px 1656.1px,-938.3px 1656.0px,-942.6px 1654.3px,-947.4px 1651.6px,-956.7px 1645.7px,-971.6px 1635.3px,-1008.4px 1610.8px,-1019.9px 1602.7px,-1032.9px 1593.1px,-1047.1px 1581.9px,-1057.2px 1573.4px,-1068.1px 1563.5px,-1074.0px 1557.8px,-1086.6px 1544.5px,-1093.5px 1536.8px,-1108.3px 1519.0px,-1116.2px 1509.0px,-1124.4px 1498.1px,-1133.0px 1486.4px,-1141.8px 1473.8px,-1151.0px 1460.1px,-1160.6px 1445.2px,-1170.5px 1429.1px,-1180.8px 1411.7px,-1191.4px 1392.9px,-1202.5px 1372.5px,-1214.1px 1350.6px,-1226.1px 1327.1px,-1238.7px 1301.9px,-1251.9px 1274.9px,-1265.6px 1246.1px,-1279.9px 1215.5px,-1294.5px 1182.8px,-1309.4px 1148.1px,-1324.5px 1111.3px,-1339.7px 1072.3px,-1354.9px 1031.0px,-1370.0px 987.5px,-1385.1px 941.8px,-1400.2px 893.8px,-1415.2px 843.6px,-1430.3px 791.3px,-1445.2px 736.8px,-1460.0px 680.4px,-1474.6px 622.3px,-1488.7px 562.8px,-1502.4px 502.1px,-1515.4px 440.5px,-1527.6px 378.3px,-1539.0px 315.6px,-1549.5px 252.7px,-1559.0px 190.0px,-1567.5px 127.7px,-1574.8px 66.0px,-1581.0px 5.1px,-1585.8px -54.7px,-1589.4px -113.3px,-1591.6px -170.6px,-1592.3px -226.5px,-1591.5px -280.9px,-1589.2px -333.6px,-1585.2px -384.5px,-1579.6px -433.2px,-1572.3px -479.7px,-1563.3px -523.8px,-1552.7px -565.2px,-1540.3px -603.8px,-1526.2px -639.4px,-1510.6px -671.9px,-1493.5px -701.1px,-1475.1px -727.0px,-1455.5px -749.4px,-1434.7px -768.2px,-1412.9px -783.6px,-1390.3px -795.7px,-1366.8px -804.7px,-1342.6px -810.9px,-1317.9px -814.3px,-1292.8px -815.3px,-1267.3px -814.0px,-1241.6px -810.7px,-1215.5px -805.7px,-1189.3px -799.3px,-1162.9px -791.7px,-1136.4px -783.2px,-1110.0px -773.9px,-1083.6px -763.9px,-1057.3px -753.4px,-1031.3px -742.5px,-1005.5px -731.2px,-980.1px -719.7px,-955.0px -708.0px,-930.2px -696.1px,-905.6px -683.9px,-881.2px -671.5px,-857.1px -658.8px,-833.0px -645.9px,-809.2px -632.7px,-785.4px -619.2px,-761.7px -605.5px,-738.0px -591.6px,-690.9px -563.0px,-667.4px -548.4px,-620.5px -518.6px,-573.8px -488.0px,-527.3px -456.8px,-480.9px -425.0px,-411.6px -376.3px,-342.2px -326.7px,-272.8px -276.2px,-203.1px -225.0px,-133.7px -173.4px,50.5px -34.6px,164.4px 51.8px,489.9px 300.7px,628.5px 406.3px,768.9px 513.8px,899.4px 613.4px,990.7px 682.8px,1073.8px 746.5px,1121.0px 782.4px,1184.4px 831.1px,1207.2px 848.2px,1248.4px 879.8px);filter:brightness(.6)"></div><div class="a" style="left:0;top:0;width:100%;height:100%;background:conic-gradient(from 0deg at 1035.80px 716.78px,#ffff00 0deg,#ffff00 69.3deg,#ff0000 69.4deg,#ff0000 124.3deg,#ff00ff 124.4deg,#ff00ff 249.6deg,#ff01ff 249.8deg,#ff01ff 250deg,#ff02ff 250.2deg,#ff02ff 250.4deg,#ff04ff 250.8deg,#ff06ff 251.3deg,#ff0eff 252.9deg,#ff12ff 253.6deg,#ff15ff 254deg,#ff16ff 254.2deg,#ff19ff 254.6deg,#ff1aff 254.8deg,#ff1fff 255.5deg,#ff23ff 256deg,#ff26ff 256.4deg,#ff28ff 256.6deg,#ff29ff 256.8deg,#ff2eff 257.3deg,#ff2fff 257.5deg,#ff38ff 258.4deg,#ff39ff 258.6deg,#ff43ff 259.6deg,#ff46ff 259.8deg,#ff4fff 260.7deg,#ff52ff 260.9deg,#ff56ff 261.3deg,#ff59ff 261.5deg,#ff5cff 261.8deg,#ff5fff 262deg,#ff61ff 262.2deg,#ff64ff 262.4deg,#ff69ff 262.8deg,#ff6cff 263deg,#ff75ff 263.7deg,#ff8fff 265.4deg,#ff97ff 265.9deg,#ffa3ff 266.6deg,#ffacff 267.1deg,#ffafff 267.3deg,#ffbbff 267.9deg,#ffbeff 268.1deg,#ffd2ff 269.1deg,#ffd7ff 269.3deg,#ffe1ff 269.8deg,#ffe6ff 270deg,#ffeaff 270.2deg,#ffefff 270.4deg,#fffdff 271deg,#fffffe 271.1deg,#fffffa 271.3deg,#fffff5 271.5deg,#ffffec 271.9deg,#ffffe8 272.1deg,#ffffe3 272.3deg,#ffffc9 273.6deg,#ffffc6 273.8deg,#ffffc0 274.1deg,#ffffbd 274.3deg,#ffffb9 274.5deg,#ffffb6 274.7deg,#ffffae 275.2deg,#ffff9c 276.4deg,#ffff95 276.9deg,#ffff8c 277.6deg,#ffff86 278.1deg,#ffff80 278.6deg,#ffff7a 279.1deg,#ffff73 279.8deg,#ffff70 280deg,#ffff67 280.9deg,#ffff66 281.1deg,#ffff5c 282.1deg,#ffff5b 282.3deg,#ffff57 282.7deg,#ffff56 282.9deg,#ffff52 283.3deg,#ffff51 283.5deg,#ffff4f 283.7deg,#ffff4e 283.9deg,#ffff4c 284.1deg,#ffff4b 284.3deg,#ffff49 284.5deg,#ffff48 284.7deg,#ffff44 285.2deg,#ffff43 285.4deg,#ffff3e 286.1deg,#ffff3c 286.5deg,#ffff38 287.1deg,#ffff37 287.3deg,#ffff33 288deg,#ffff23 291.2deg,#ffff20 291.9deg,#ffff1d 292.6deg,#ffff1b 293.1deg,#ffff1a 293.5deg,#ffff18 293.9deg,#ffff17 294.3deg,#ffff16 294.5deg,#ffff15 294.9deg,#ffff14 295.1deg,#ffff13 295.5deg,#ffff12 295.7deg,#ffff11 296.1deg,#ffff10 296.3deg,#ffff0f 296.8deg,#ffff0e 297deg,#ffff0d 297.4deg,#ffff0c 297.8deg,#ffff0b 298.2deg,#ffff0a 298.4deg,#ffff0a 298.6deg,#ffff09 298.8deg,#ffff09 299.1deg,#ffff08 299.3deg,#ffff08 299.5deg,#ffff07 299.7deg,#ffff07 300deg,#ffff06 300.2deg,#ffff06 300.4deg,#ffff05 300.6deg,#ffff05 300.9deg,#ffff04 301.1deg,#ffff04 301.5deg,#ffff03 301.7deg,#ffff03 302.1deg,#ffff02 302.3deg,#ffff02 302.8deg,#ffff01 303deg,#ffff01 303.6deg,#ffff00 303.8deg,#ffff00 360deg),conic-gradient(from 0deg at -576.89px -385.82px,#00ff00 0deg,#00ff00 13.3deg,#ffff00 13.4deg,#ffff00 125.3deg,#ffff01 125.5deg,#ffff01 126.5deg,#ffff02 126.7deg,#ffff02 127.4deg,#ffff03 127.6deg,#ffff03 128.3deg,#ffff04 128.5deg,#ffff04 129.1deg,#ffff05 129.3deg,#ffff05 129.8deg,#ffff06 130deg,#ffff06 130.5deg,#ffff07 130.7deg,#ffff07 131.1deg,#ffff08 131.3deg,#ffff08 131.8deg,#ffff09 132deg,#ffff09 132.3deg,#ffff0a 132.5deg,#ffff0a 132.9deg,#ffff0b 133.1deg,#ffff0b 133.5deg,#ffff0c 133.7deg,#ffff0c 134deg,#ffff0d 134.2deg,#ffff0d 134.5deg,#ffff0e 134.7deg,#ffff0e 135deg,#ffff0f 135.2deg,#ffff0f 135.5deg,#ffff10 135.7deg,#ffff10 136deg,#ffff11 136.2deg,#ffff11 136.5deg,#ffff12 136.7deg,#ffff12 136.9deg,#ffff13 137.1deg,#ffff13 137.4deg,#ffff14 137.6deg,#ffff14 137.8deg,#ffff15 138deg,#ffff15 138.2deg,#ffff16 138.4deg,#ffff16 138.6deg,#ffff17 138.8deg,#ffff17 139deg,#ffff18 139.2deg,#ffff18 139.4deg,#ffff19 139.6deg,#ffff19 139.8deg,#ffff1a 140deg,#ffff1a 140.2deg,#ffff1b 140.4deg,#ffff1c 140.8deg,#ffff1d 141.3deg,#ffff1e 141.5deg,#ffff1f 141.9deg,#ffff20 142.3deg,#ffff21 142.5deg,#ffff22 143deg,#ffff23 143.2deg,#ffff24 143.6deg,#ffff25 143.8deg,#ffff26 144.2deg,#ffff27 144.4deg,#ffff28 144.8deg,#ffff29 145deg,#ffff2b 145.7deg,#ffff2c 145.9deg,#ffff2e 146.4deg,#ffff2f 146.8deg,#ffff31 147.2deg,#ffff33 147.7deg,#ffff35 148.2deg,#ffff37 148.7deg,#ffff3a 149.4deg,#ffff3d 150.1deg,#ffff4e 153.5deg,#ffff52 154.2deg,#ffff56 154.9deg,#ffff59 155.4deg,#ffff5e 156.1deg,#ffff60 156.5deg,#ffff65 157.2deg,#ffff6a 157.9deg,#ffff6e 158.4deg,#ffff6f 158.6deg,#ffff71 158.8deg,#ffff72 159deg,#ffff75 159.3deg,#ffff76 159.5deg,#ffff79 159.8deg,#ffff7a 160deg,#ffff7f 160.5deg,#ffff80 160.7deg,#ffff88 161.5deg,#ffff89 161.7deg,#ffff97 163.1deg,#ffff9a 163.3deg,#ffffa2 164.1deg,#ffffa5 164.3deg,#ffffa9 164.7deg,#ffffac 164.9deg,#ffffae 165.1deg,#ffffb1 165.3deg,#ffffb3 165.5deg,#ffffb6 165.7deg,#ffffbb 166.1deg,#ffffbe 166.3deg,#ffffc8 167deg,#ffffd1 167.6deg,#ffffd9 168.1deg,#ffffe1 168.6deg,#ffffe5 168.8deg,#ffffe8 169deg,#ffffec 169.2deg,#ffffef 169.4deg,#ffffff 170.2deg,#f6ffff 170.7deg,#e6ffff 171.5deg,#e3ffff 171.7deg,#dbffff 172.1deg,#d8ffff 172.3deg,#d4ffff 172.5deg,#d1ffff 172.7deg,#cdffff 172.9deg,#caffff 173.1deg,#c3ffff 173.5deg,#c0ffff 173.7deg,#b9ffff 174.1deg,#b3ffff 174.5deg,#a5ffff 175.4deg,#9fffff 175.8deg,#92ffff 176.7deg,#8bffff 177.2deg,#82ffff 177.9deg,#7fffff 178.1deg,#7affff 178.5deg,#77ffff 178.7deg,#75ffff 178.9deg,#72ffff 179.1deg,#70ffff 179.3deg,#6dffff 179.5deg,#6affff 179.8deg,#67ffff 180deg,#64ffff 180.3deg,#61ffff 180.5deg,#5cffff 181deg,#59ffff 181.2deg,#4fffff 182.2deg,#4cffff 182.4deg,#3dffff 183.9deg,#3cffff 184.1deg,#32ffff 185.1deg,#31ffff 185.3deg,#2cffff 185.8deg,#2bffff 186deg,#27ffff 186.4deg,#26ffff 186.6deg,#23ffff 186.9deg,#22ffff 187.1deg,#20ffff 187.3deg,#1fffff 187.5deg,#1dffff 187.7deg,#1cffff 187.9deg,#18ffff 188.4deg,#17ffff 188.6deg,#13ffff 189.2deg,#12ffff 189.4deg,#0effff 190deg,#0cffff 190.4deg,#05ffff 191.8deg,#03ffff 192.3deg,#02ffff 192.7deg,#01ffff 192.9deg,#00ffff 193.4deg,#00ffff 304.3deg,#00ff00 304.4deg,#00ff00 360deg),conic-gradient(from 0deg at -1023.78px 1491.58px,#00ffff 0deg,#00ffff 13.7deg,#01ffff 13.9deg,#01ffff 14.2deg,#02ffff 14.4deg,#02ffff 14.6deg,#03ffff 14.8deg,#05ffff 15.5deg,#06ffff 15.7deg,#08ffff 16.3deg,#09ffff 16.5deg,#0bffff 17deg,#18ffff 19.6deg,#1bffff 20.1deg,#1effff 20.6deg,#21ffff 21.1deg,#24ffff 21.5deg,#25ffff 21.7deg,#28ffff 22.1deg,#2bffff 22.5deg,#2cffff 22.7deg,#2effff 22.9deg,#2fffff 23.1deg,#31ffff 23.3deg,#32ffff 23.5deg,#35ffff 23.8deg,#36ffff 24deg,#39ffff 24.3deg,#3affff 24.5deg,#3fffff 25deg,#40ffff 25.2deg,#49ffff 26.1deg,#4affff 26.3deg,#59ffff 27.8deg,#5cffff 28deg,#64ffff 28.8deg,#67ffff 29deg,#6bffff 29.4deg,#6effff 29.6deg,#71ffff 29.9deg,#74ffff 30.1deg,#76ffff 30.3deg,#79ffff 30.5deg,#7fffff 31deg,#85ffff 31.4deg,#8dffff 32deg,#93ffff 32.4deg,#9cffff 33deg,#a7ffff 33.7deg,#aeffff 34.1deg,#b1ffff 34.3deg,#b8ffff 34.7deg,#c1ffff 35.2deg,#c4ffff 35.4deg,#d0ffff 36deg,#d3ffff 36.2deg,#e3ffff 37deg,#e8ffff 37.2deg,#f2ffff 37.7deg,#f7ffff 37.9deg,#fbffff 38.1deg,#feffff 38.2deg,#fffcff 38.4deg,#fff1ff 38.9deg,#ffedff 39.1deg,#ffe8ff 39.3deg,#ffd6ff 40.2deg,#ffd3ff 40.4deg,#ffcbff 40.8deg,#ffc8ff 41deg,#ffc4ff 41.2deg,#ffc1ff 41.4deg,#ffbdff 41.6deg,#ffbaff 41.8deg,#ffb2ff 42.3deg,#ffa0ff 43.5deg,#ff99ff 44deg,#ff90ff 44.7deg,#ff8dff 44.9deg,#ff8bff 45.1deg,#ff88ff 45.3deg,#ff86ff 45.5deg,#ff83ff 45.7deg,#ff7fff 46.1deg,#ff7cff 46.3deg,#ff76ff 46.9deg,#ff73ff 47.1deg,#ff5fff 49.1deg,#ff5eff 49.3deg,#ff57ff 50deg,#ff56ff 50.2deg,#ff52ff 50.6deg,#ff51ff 50.8deg,#ff4eff 51.1deg,#ff4dff 51.3deg,#ff4aff 51.6deg,#ff49ff 51.8deg,#ff47ff 52deg,#ff46ff 52.2deg,#ff44ff 52.4deg,#ff43ff 52.6deg,#ff3fff 53.1deg,#ff3eff 53.3deg,#ff3bff 53.7deg,#ff3aff 53.9deg,#ff36ff 54.5deg,#ff35ff 54.7deg,#ff32ff 55.2deg,#ff2fff 55.7deg,#ff2bff 56.4deg,#ff1eff 59deg,#ff1aff 59.9deg,#ff18ff 60.4deg,#ff16ff 60.9deg,#ff14ff 61.4deg,#ff13ff 61.8deg,#ff11ff 62.2deg,#ff10ff 62.6deg,#ff0fff 62.8deg,#ff0eff 63.2deg,#ff0dff 63.4deg,#ff0bff 64.1deg,#ff0aff 64.5deg,#ff09ff 64.7deg,#ff09ff 64.9deg,#ff08ff 65.1deg,#ff08ff 65.3deg,#ff07ff 65.5deg,#ff06ff 65.9deg,#ff06ff 66.1deg,#ff05ff 66.3deg,#ff05ff 66.5deg,#ff04ff 66.7deg,#ff04ff 67deg,#ff03ff 67.2deg,#ff03ff 67.5deg,#ff02ff 67.7deg,#ff02ff 68deg,#ff01ff 68.2deg,#ff01ff 68.8deg,#ff00ff 69deg,#ff00ff 193.3deg,#0000ff 193.4deg,#0000ff 249.3deg,#00ffff 249.4deg,#00ffff 360deg);background-blend-mode:darken;clip-path:polygon(1035.8px 716.8px,-576.9px -385.8px,-1023.8px 1491.6px)"></div></div>
<svg class="a" style="left:0;top:0" width="1717" height="888" viewBox="0 0 1717 888" fill="#e6e6e6">
<defs>
<linearGradient id="b0"><stop offset="0" stop-color="#ffff59"/><stop offset=".28" stop-color="#ffff00"/><stop offset=".55" stop-color="#ffff00"/><stop offset="1" stop-color="#7a7a00"/></linearGradient>
<linearGradient id="b1"><stop offset="0" stop-color="#ff59ff"/><stop offset=".28" stop-color="#ff00ff"/><stop offset=".55" stop-color="#ff00ff"/><stop offset="1" stop-color="#7a007a"/></linearGradient>
<linearGradient id="b2"><stop offset="0" stop-color="#59ffff"/><stop offset=".28" stop-color="#00ffff"/><stop offset=".55" stop-color="#00ffff"/><stop offset="1" stop-color="#007a7a"/></linearGradient>
<linearGradient id="b3"><stop offset="0" stop-color="#5959ff"/><stop offset=".28" stop-color="#0000ff"/><stop offset=".55" stop-color="#0000ff"/><stop offset="1" stop-color="#00007a"/></linearGradient>
<linearGradient id="b4"><stop offset="0" stop-color="#59ff59"/><stop offset=".28" stop-color="#00ff00"/><stop offset=".55" stop-color="#00ff00"/><stop offset="1" stop-color="#007a00"/></linearGradient>
<linearGradient id="b5"><stop offset="0" stop-color="#ff5959"/><stop offset=".28" stop-color="#ff0000"/><stop offset=".55" stop-color="#ff0000"/><stop offset="1" stop-color="#7a0000"/></linearGradient>
<linearGradient id="b6"><stop offset="0" stop-color="#73b2c6"/><stop offset=".28" stop-color="#2889a7"/><stop offset=".55" stop-color="#2889a7"/><stop offset="1" stop-color="#134250"/></linearGradient>
<linearGradient id="b7"><stop offset="0" stop-color="#d391ba"/><stop offset=".28" stop-color="#bb5695"/><stop offset=".55" stop-color="#bb5695"/><stop offset="1" stop-color="#5a2948"/></linearGradient>
<linearGradient id="b8"><stop offset="0" stop-color="#f0db87"/><stop offset=".28" stop-color="#e8c846"/><stop offset=".55" stop-color="#e8c846"/><stop offset="1" stop-color="#6f6022"/></linearGradient>
<linearGradient id="b9"><stop offset="0" stop-color="#c88285"/><stop offset=".28" stop-color="#aa3e44"/><stop offset=".55" stop-color="#aa3e44"/><stop offset="1" stop-color="#521e21"/></linearGradient>
<linearGradient id="b10"><stop offset="0" stop-color="#92bb90"/><stop offset=".28" stop-color="#589654"/><stop offset=".55" stop-color="#589654"/><stop offset="1" stop-color="#2a4828"/></linearGradient>
<linearGradient id="b11"><stop offset="0" stop-color="#7e81bb"/><stop offset=".28" stop-color="#383d96"/><stop offset=".55" stop-color="#383d96"/><stop offset="1" stop-color="#1b1d48"/></linearGradient>
<linearGradient id="b12"><stop offset="0" stop-color="#ecc584"/><stop offset=".28" stop-color="#e2a642"/><stop offset=".55" stop-color="#e2a642"/><stop offset="1" stop-color="#6c5020"/></linearGradient>
<linearGradient id="b13"><stop offset="0" stop-color="#c4d58c"/><stop offset=".28" stop-color="#a4be4e"/><stop offset=".55" stop-color="#a4be4e"/><stop offset="1" stop-color="#4f5b25"/></linearGradient>
<linearGradient id="b14"><stop offset="0" stop-color="#96809f"/><stop offset=".28" stop-color="#5e3c6c"/><stop offset=".55" stop-color="#5e3c6c"/><stop offset="1" stop-color="#2d1d34"/></linearGradient>
<linearGradient id="b15"><stop offset="0" stop-color="#d7949a"/><stop offset=".28" stop-color="#c15a63"/><stop offset=".55" stop-color="#c15a63"/><stop offset="1" stop-color="#5d2b30"/></linearGradient>
<linearGradient id="b16"><stop offset="0" stop-color="#8d94c5"/><stop offset=".28" stop-color="#505ba6"/><stop offset=".55" stop-color="#505ba6"/><stop offset="1" stop-color="#262c50"/></linearGradient>
<linearGradient id="b17"><stop offset="0" stop-color="#e4ab76"/><stop offset=".28" stop-color="#d67e2c"/><stop offset=".55" stop-color="#d67e2c"/><stop offset="1" stop-color="#673c15"/></linearGradient>
<linearGradient id="b18"><stop offset="0" stop-color="#9cd4c8"/><stop offset=".28" stop-color="#67bdaa"/><stop offset=".55" stop-color="#67bdaa"/><stop offset="1" stop-color="#315b52"/></linearGradient>
<linearGradient id="b19"><stop offset="0" stop-color="#b0accc"/><stop offset=".28" stop-color="#8580b1"/><stop offset=".55" stop-color="#8580b1"/><stop offset="1" stop-color="#403d55"/></linearGradient>
<linearGradient id="b20"><stop offset="0" stop-color="#929f85"/><stop offset=".28" stop-color="#576c43"/><stop offset=".55" stop-color="#576c43"/><stop offset="1" stop-color="#2a3420"/></linearGradient>
<linearGradient id="b21"><stop offset="0" stop-color="#99a9bf"/><stop offset=".28" stop-color="#627a9d"/><stop offset=".55" stop-color="#627a9d"/><stop offset="1" stop-color="#2f3b4b"/></linearGradient>
<linearGradient id="b22"><stop offset="0" stop-color="#d7bbae"/><stop offset=".28" stop-color="#c29682"/><stop offset=".55" stop-color="#c29682"/><stop offset="1" stop-color="#5d483e"/></linearGradient>
<linearGradient id="b23"><stop offset="0" stop-color="#a48f85"/><stop offset=".28" stop-color="#735244"/><stop offset=".55" stop-color="#735244"/><stop offset="1" stop-color="#372721"/></linearGradient>
<linearGradient id="b25"><stop offset="0" stop-color="#cccccc"/><stop offset=".28" stop-color="#b0b0b0"/><stop offset=".55" stop-color="#b0b0b0"/><stop offset="1" stop-color="#545454"/></linearGradient>
<linearGradient id="b26"><stop offset="0" stop-color="#dbdbdb"/><stop offset=".28" stop-color="#c8c8c8"/><stop offset=".55" stop-color="#c8c8c8"/><stop offset="1" stop-color="#606060"/></linearGradient>
<linearGradient id="b27"><stop offset="0" stop-color="#e8e8e8"/><stop offset=".28" stop-color="#dcdcdc"/><stop offset=".55" stop-color="#dcdcdc"/><stop offset="1" stop-color="#6a6a6a"/></linearGradient>
<linearGradient id="b28"><stop offset="0" stop-color="#f3f3f3"/><stop offset=".28" stop-color="#ececec"/><stop offset=".55" stop-color="#ececec"/><stop offset="1" stop-color="#717171"/></linearGradient>
<linearGradient id="b29"><stop offset="0" stop-color="#ffffff"/><stop offset=".28" stop-color="#ffffff"/><stop offset=".55" stop-color="#ffffff"/><stop offset="1" stop-color="#7a7a7a"/></linearGradient>
<linearGradient id="gL" x1="0" y1="0" x2="0" y2="1"><stop offset="0" stop-color="#ffff58"/><stop offset=".22" stop-color="#ffff00"/><stop offset=".45" stop-color="#ffff00"/><stop offset=".76" stop-color="#cbc600"/><stop offset="1" stop-color="#625e00"/></linearGradient>
<linearGradient id="gC" x1="0" y1="0" x2="0" y2="1"><stop offset="0" stop-color="#ffff58"/><stop offset=".22" stop-color="#ffff00"/><stop offset=".45" stop-color="#ffff00"/><stop offset=".76" stop-color="#cbc600"/><stop offset="1" stop-color="#625e00"/></linearGradient>
<linearGradient id="gH" x1="0" y1="0" x2="0" y2="1"><stop offset="0" stop-color="#ffff58"/><stop offset=".22" stop-color="#ffff00"/><stop offset=".45" stop-color="#ffff00"/><stop offset=".76" stop-color="#cbc600"/><stop offset="1" stop-color="#625e00"/></linearGradient>
<linearGradient id="th" x1="0" y1="0" x2="0" y2="1"><stop offset="0" stop-color="#303030"/><stop offset=".5" stop-color="#292929"/><stop offset=".52" stop-color="#171717"/><stop offset="1" stop-color="#0e0e0e"/></linearGradient>
<linearGradient id="tl" x1="0" y1="0" x2="0" y2="1"><stop offset="0" stop-color="#333"/><stop offset="1" stop-color="#262626"/></linearGradient>
</defs>
<text x="22.9" y="84.1" font-size="43" textLength="241.2" lengthAdjust="spacingAndGlyphs" fill="#eaeaea">ColorChecker</text>
<text x="87.9" y="141.7" font-size="29.3" textLength="49.0" lengthAdjust="spacingAndGlyphs" fill="#eaeaea">Avg</text>
<text x="147.5" y="141.7" font-size="29.3" textLength="111.7" lengthAdjust="spacingAndGlyphs" fill="#eaeaea">dE2000:</text>
<text x="269.8" y="141.7" font-size="29.3" textLength="58.7" lengthAdjust="spacingAndGlyphs" fill="#eaeaea">2,36</text>
<text x="84.7" y="184.1" font-size="29.3" textLength="57.1" lengthAdjust="spacingAndGlyphs" fill="#eaeaea">Max</text>
<text x="152.4" y="184.1" font-size="29.3" textLength="111.7" lengthAdjust="spacingAndGlyphs" fill="#eaeaea">dE2000:</text>
<text x="273.5" y="184.1" font-size="29.3" textLength="59.4" lengthAdjust="spacingAndGlyphs" fill="#eaeaea">4,07</text>
<text x="161.2" y="220.0" font-size="16" textLength="81.4" lengthAdjust="spacingAndGlyphs">DeltaE 2000</text>
<text x="12.7" y="674.9" font-size="31.3" textLength="225.6" lengthAdjust="spacingAndGlyphs" fill="#eaeaea">Current Reading</text>
<text x="12.7" y="718.0" font-size="25.9" textLength="18.4" lengthAdjust="spacingAndGlyphs" fill="#eaeaea">x:</text>
<text x="39.2" y="718.0" font-size="25.9" textLength="64.2" lengthAdjust="spacingAndGlyphs" fill="#eaeaea">0,442</text>
<text x="12.7" y="759.5" font-size="25.9" textLength="18.4" lengthAdjust="spacingAndGlyphs" fill="#eaeaea">y:</text>
<text x="39.2" y="759.5" font-size="25.9" textLength="79.4" lengthAdjust="spacingAndGlyphs" fill="#eaeaea">0,5357</text>
<text x="12.7" y="801.7" font-size="25.9" textLength="26.5" lengthAdjust="spacingAndGlyphs" fill="#eaeaea">fL:</text>
<text x="48.3" y="801.7" font-size="25.9" textLength="92.6" lengthAdjust="spacingAndGlyphs" fill="#eaeaea">111,637</text>
<text x="12.7" y="843.3" font-size="25.9" textLength="76.2" lengthAdjust="spacingAndGlyphs" fill="#eaeaea">cd/m²:</text>
<text x="98.1" y="843.3" font-size="25.9" textLength="92.9" lengthAdjust="spacingAndGlyphs" fill="#eaeaea">382,498</text>
<rect x="18" y="225" width="366.5" height="370" fill="#232323"/>
<line x1="66.99" y1="225" x2="66.99" y2="595" stroke="#8c8c8c" stroke-width="1.3"/>
<line x1="115.73" y1="225" x2="115.73" y2="595" stroke="#8c8c8c" stroke-width="1.3"/>
<line x1="164.47" y1="225" x2="164.47" y2="595" stroke="#8c8c8c" stroke-width="1.3"/>
<line x1="213.21" y1="225" x2="213.21" y2="595" stroke="#8c8c8c" stroke-width="1.3"/>
<line x1="310.69" y1="225" x2="310.69" y2="595" stroke="#8c8c8c" stroke-width="1.3"/>
<line x1="359.43" y1="225" x2="359.43" y2="595" stroke="#8c8c8c" stroke-width="1.3"/>
<rect x="19" y="227" width="26.06" height="9.3" fill="#000"/>
<rect x="19" y="228" width="24.66" height="7" fill="url(#b0)"/>
<rect x="19" y="239" width="34.59" height="9.3" fill="#000"/>
<rect x="19" y="240" width="33.19" height="7" fill="url(#b1)"/>
<rect x="19" y="250" width="74.07" height="9.3" fill="#000"/>
<rect x="19" y="251" width="72.67" height="7" fill="url(#b2)"/>
<rect x="19" y="263" width="55.54" height="9.3" fill="#000"/>
<rect x="19" y="264" width="54.14" height="7" fill="url(#b3)"/>
<rect x="19" y="276" width="47.99" height="9.3" fill="#000"/>
<rect x="19" y="277" width="46.59" height="7" fill="url(#b4)"/>
<rect x="19" y="288" width="65.05" height="9.3" fill="#000"/>
<rect x="19" y="289" width="63.65" height="7" fill="url(#b5)"/>
<rect x="19" y="301" width="68.95" height="9.3" fill="#000"/>
<rect x="19" y="302" width="67.55" height="7" fill="url(#b6)"/>
<rect x="19" y="312" width="32.64" height="9.3" fill="#000"/>
<rect x="19" y="313" width="31.24" height="7" fill="url(#b7)"/>
<rect x="19" y="325" width="46.77" height="9.3" fill="#000"/>
<rect x="19" y="326" width="45.37" height="7" fill="url(#b8)"/>
<rect x="19" y="337" width="41.65" height="9.3" fill="#000"/>
<rect x="19" y="338" width="40.25" height="7" fill="url(#b9)"/>
<rect x="19" y="350" width="34.59" height="9.3" fill="#000"/>
<rect x="19" y="351" width="33.19" height="7" fill="url(#b10)"/>
<rect x="19" y="363" width="70.41" height="9.3" fill="#000"/>
<rect x="19" y="364" width="69.01" height="7" fill="url(#b11)"/>
<rect x="19" y="374" width="47.02" height="9.3" fill="#000"/>
<rect x="19" y="375" width="45.62" height="7" fill="url(#b12)"/>
<rect x="19" y="387" width="18.26" height="9.3" fill="#000"/>
<rect x="19" y="388" width="16.86" height="7" fill="url(#b13)"/>
<rect x="19" y="399" width="59.44" height="9.3" fill="#000"/>
<rect x="19" y="400" width="58.04" height="7" fill="url(#b14)"/>
<rect x="19" y="412" width="34.1" height="9.3" fill="#000"/>
<rect x="19" y="413" width="32.7" height="7" fill="url(#b15)"/>
<rect x="19" y="424" width="73.82" height="9.3" fill="#000"/>
<rect x="19" y="425" width="72.42" height="7" fill="url(#b16)"/>
<rect x="19" y="436" width="34.34" height="9.3" fill="#000"/>
<rect x="19" y="437" width="32.94" height="7" fill="url(#b17)"/>
<rect x="19" y="448.5" width="67.73" height="9.3" fill="#000"/>
<rect x="19" y="449.5" width="66.33" height="7" fill="url(#b18)"/>
<rect x="19" y="461" width="36.05" height="9.3" fill="#000"/>
<rect x="19" y="462" width="34.65" height="7" fill="url(#b19)"/>
<rect x="19" y="473" width="22.4" height="9.3" fill="#000"/>
<rect x="19" y="474" width="21" height="7" fill="url(#b20)"/>
<rect x="19" y="485" width="55.3" height="9.3" fill="#000"/>
<rect x="19" y="486" width="53.9" height="7" fill="url(#b21)"/>
<rect x="19" y="497" width="65.05" height="9.3" fill="#000"/>
<rect x="19" y="498" width="63.65" height="7" fill="url(#b22)"/>
<rect x="19" y="510" width="69.19" height="9.3" fill="#000"/>
<rect x="19" y="511" width="67.79" height="7" fill="url(#b23)"/>
<rect x="19" y="535" width="79.67" height="9.3" fill="#000"/>
<rect x="19" y="536" width="78.27" height="7" fill="url(#b25)"/>
<rect x="19" y="546.5" width="92.1" height="9.3" fill="#000"/>
<rect x="19" y="547.5" width="90.7" height="7" fill="url(#b26)"/>
<rect x="19" y="559" width="96.24" height="9.3" fill="#000"/>
<rect x="19" y="560" width="94.84" height="7" fill="url(#b27)"/>
<rect x="19" y="572" width="98.19" height="9.3" fill="#000"/>
<rect x="19" y="573" width="96.79" height="7" fill="url(#b28)"/>
<rect x="19" y="584.3" width="98.44" height="9.3" fill="#000"/>
<rect x="19" y="585.3" width="97.04" height="7" fill="url(#b29)"/>
<rect x="18.2" y="225.6" width="366.3" height="369.5" fill="none" stroke="#989898" stroke-width="1.7"/>
<line x1="42.62" y1="224.7" x2="42.62" y2="595.8" stroke="#008000" stroke-width="1.3"/>
<line x1="91.36" y1="224.7" x2="91.36" y2="595.8" stroke="#ffff00" stroke-width="1.5"/>
<line x1="261.95" y1="224.7" x2="261.95" y2="595.8" stroke="#ff0000" stroke-width="1.5"/>
<line x1="18.25" y1="595" x2="18.25" y2="602" stroke="#d8d8d8" stroke-width="1.3"/>
<text x="18.2" y="617.9" font-size="15.4" text-anchor="middle">0</text>
<line x1="66.99" y1="595" x2="66.99" y2="602" stroke="#d8d8d8" stroke-width="1.3"/>
<text x="67.0" y="617.9" font-size="15.4" text-anchor="middle">2</text>
<line x1="115.73" y1="595" x2="115.73" y2="602" stroke="#d8d8d8" stroke-width="1.3"/>
<text x="115.7" y="617.9" font-size="15.4" text-anchor="middle">4</text>
<line x1="164.47" y1="595" x2="164.47" y2="602" stroke="#d8d8d8" stroke-width="1.3"/>
<text x="164.5" y="617.9" font-size="15.4" text-anchor="middle">6</text>
<line x1="213.21" y1="595" x2="213.21" y2="602" stroke="#d8d8d8" stroke-width="1.3"/>
<text x="213.2" y="617.9" font-size="15.4" text-anchor="middle">8</text>
<line x1="261.95" y1="595" x2="261.95" y2="602" stroke="#d8d8d8" stroke-width="1.3"/>
<text x="262.0" y="617.9" font-size="15.4" text-anchor="middle">10</text>
<line x1="310.69" y1="595" x2="310.69" y2="602" stroke="#d8d8d8" stroke-width="1.3"/>
<text x="310.7" y="617.9" font-size="15.4" text-anchor="middle">12</text>
<line x1="359.43" y1="595" x2="359.43" y2="602" stroke="#d8d8d8" stroke-width="1.3"/>
<text x="359.4" y="617.9" font-size="15.4" text-anchor="middle">14</text>
<rect x="430.5" y="71.4" width="150" height="346.4" fill="#232323"/>
<line x1="430.5" y1="158" x2="580.5" y2="158" stroke="#8c8c8c" stroke-width="1.3"/>
<line x1="430.5" y1="245" x2="580.5" y2="245" stroke="#8c8c8c" stroke-width="1.3"/>
<line x1="430.5" y1="332" x2="580.5" y2="332" stroke="#8c8c8c" stroke-width="1.3"/>
<rect x="430.5" y="71.4" width="150" height="346.4" fill="none" stroke="#989898" stroke-width="1.6"/>
<line x1="429.7" y1="114.5" x2="581.3" y2="114.5" stroke="#ffff00" stroke-width="1.6"/>
<line x1="429.7" y1="375.5" x2="581.3" y2="375.5" stroke="#ffff00" stroke-width="1.6"/>
<rect x="445" y="215.25" width="121" height="30.55" fill="#000"/>
<rect x="446.5" y="216.66" width="118.2" height="27.95" fill="url(#gL)"/>
<line x1="429.7" y1="201.5" x2="581.3" y2="201.5" stroke="#007a00" stroke-width="1.45"/>
<line x1="429.7" y1="288.5" x2="581.3" y2="288.5" stroke="#007a00" stroke-width="1.45"/>
<line x1="424" y1="71.5" x2="430.5" y2="71.5" stroke="#d8d8d8" stroke-width="1.3"/>
<text x="424.3" y="76.8" font-size="15.4" text-anchor="end">4</text>
<line x1="424" y1="114.5" x2="430.5" y2="114.5" stroke="#d8d8d8" stroke-width="1.3"/>
<text x="424.3" y="119.8" font-size="15.4" text-anchor="end">3</text>
<line x1="424" y1="158" x2="430.5" y2="158" stroke="#d8d8d8" stroke-width="1.3"/>
<text x="424.3" y="163.3" font-size="15.4" text-anchor="end">2</text>
<line x1="424" y1="201.5" x2="430.5" y2="201.5" stroke="#d8d8d8" stroke-width="1.3"/>
<text x="424.3" y="206.8" font-size="15.4" text-anchor="end">1</text>
<line x1="424" y1="245" x2="430.5" y2="245" stroke="#d8d8d8" stroke-width="1.3"/>
<text x="424.3" y="250.3" font-size="15.4" text-anchor="end">0</text>
<line x1="424" y1="288.5" x2="430.5" y2="288.5" stroke="#d8d8d8" stroke-width="1.3"/>
<text x="424.3" y="293.8" font-size="15.4" text-anchor="end">-1</text>
<line x1="424" y1="332" x2="430.5" y2="332" stroke="#d8d8d8" stroke-width="1.3"/>
<text x="424.3" y="337.3" font-size="15.4" text-anchor="end">-2</text>
<line x1="424" y1="375.5" x2="430.5" y2="375.5" stroke="#d8d8d8" stroke-width="1.3"/>
<text x="424.3" y="380.8" font-size="15.4" text-anchor="end">-3</text>
<line x1="424" y1="417.8" x2="430.5" y2="417.8" stroke="#d8d8d8" stroke-width="1.3"/>
<text x="424.3" y="423.1" font-size="15.4" text-anchor="end">-4</text>
<text x="473.0" y="66.3" font-size="16" textLength="46.7" lengthAdjust="spacingAndGlyphs">Delta L</text>
<rect x="626.6" y="71.4" width="150.8" height="346.4" fill="#232323"/>
<line x1="626.6" y1="129" x2="777.4" y2="129" stroke="#8c8c8c" stroke-width="1.3"/>
<line x1="626.6" y1="187" x2="777.4" y2="187" stroke="#8c8c8c" stroke-width="1.3"/>
<line x1="626.6" y1="245" x2="777.4" y2="245" stroke="#8c8c8c" stroke-width="1.3"/>
<line x1="626.6" y1="303" x2="777.4" y2="303" stroke="#8c8c8c" stroke-width="1.3"/>
<line x1="626.6" y1="361" x2="777.4" y2="361" stroke="#8c8c8c" stroke-width="1.3"/>
<rect x="626.6" y="71.4" width="150.8" height="346.4" fill="none" stroke="#989898" stroke-width="1.6"/>
<line x1="625.8" y1="158" x2="778.2" y2="158" stroke="#e6e600" stroke-width="1.6"/>
<line x1="625.8" y1="332" x2="778.2" y2="332" stroke="#e6e600" stroke-width="1.6"/>
<rect x="641.2" y="126.37" width="120.8" height="119.43" fill="#000"/>
<rect x="642.7" y="127.77" width="118" height="116.83" fill="url(#gC)"/>
<line x1="625.8" y1="216" x2="778.2" y2="216" stroke="#007a00" stroke-width="1.45"/>
<line x1="625.8" y1="274" x2="778.2" y2="274" stroke="#007a00" stroke-width="1.45"/>
<line x1="620.1" y1="71.5" x2="626.6" y2="71.5" stroke="#d8d8d8" stroke-width="1.3"/>
<text x="620.4" y="76.8" font-size="15.4" text-anchor="end">6</text>
<line x1="620.1" y1="129" x2="626.6" y2="129" stroke="#d8d8d8" stroke-width="1.3"/>
<text x="620.4" y="134.3" font-size="15.4" text-anchor="end">4</text>
<line x1="620.1" y1="187" x2="626.6" y2="187" stroke="#d8d8d8" stroke-width="1.3"/>
<text x="620.4" y="192.3" font-size="15.4" text-anchor="end">2</text>
<line x1="620.1" y1="245" x2="626.6" y2="245" stroke="#d8d8d8" stroke-width="1.3"/>
<text x="620.4" y="250.3" font-size="15.4" text-anchor="end">0</text>
<line x1="620.1" y1="303" x2="626.6" y2="303" stroke="#d8d8d8" stroke-width="1.3"/>
<text x="620.4" y="308.3" font-size="15.4" text-anchor="end">-2</text>
<line x1="620.1" y1="361" x2="626.6" y2="361" stroke="#d8d8d8" stroke-width="1.3"/>
<text x="620.4" y="366.3" font-size="15.4" text-anchor="end">-4</text>
<line x1="620.1" y1="417.8" x2="626.6" y2="417.8" stroke="#d8d8d8" stroke-width="1.3"/>
<text x="620.4" y="423.1" font-size="15.4" text-anchor="end">-6</text>
<text x="668.3" y="66.3" font-size="16" textLength="48.6" lengthAdjust="spacingAndGlyphs">Delta C</text>
<rect x="822.5" y="71.4" width="165" height="346.4" fill="#232323"/>
<line x1="822.5" y1="158" x2="987.5" y2="158" stroke="#8c8c8c" stroke-width="1.3"/>
<line x1="822.5" y1="245" x2="987.5" y2="245" stroke="#8c8c8c" stroke-width="1.3"/>
<line x1="822.5" y1="332" x2="987.5" y2="332" stroke="#8c8c8c" stroke-width="1.3"/>
<rect x="822.5" y="71.4" width="165" height="346.4" fill="none" stroke="#989898" stroke-width="1.6"/>
<line x1="821.7" y1="114.5" x2="988.3" y2="114.5" stroke="#ffff00" stroke-width="1.6"/>
<line x1="821.7" y1="375.5" x2="988.3" y2="375.5" stroke="#ffff00" stroke-width="1.6"/>
<rect x="840" y="244.4" width="130.5" height="95.79" fill="#000"/>
<rect x="841.5" y="245.8" width="127.7" height="93.19" fill="url(#gH)"/>
<line x1="821.7" y1="201.5" x2="988.3" y2="201.5" stroke="#007a00" stroke-width="1.45"/>
<line x1="821.7" y1="288.5" x2="988.3" y2="288.5" stroke="#007a00" stroke-width="1.45"/>
<line x1="816" y1="71.5" x2="822.5" y2="71.5" stroke="#d8d8d8" stroke-width="1.3"/>
<text x="816.3" y="76.8" font-size="15.4" text-anchor="end">4</text>
<line x1="816" y1="114.5" x2="822.5" y2="114.5" stroke="#d8d8d8" stroke-width="1.3"/>
<text x="816.3" y="119.8" font-size="15.4" text-anchor="end">3</text>
<line x1="816" y1="158" x2="822.5" y2="158" stroke="#d8d8d8" stroke-width="1.3"/>
<text x="816.3" y="163.3" font-size="15.4" text-anchor="end">2</text>
<line x1="816" y1="201.5" x2="822.5" y2="201.5" stroke="#d8d8d8" stroke-width="1.3"/>
<text x="816.3" y="206.8" font-size="15.4" text-anchor="end">1</text>
<line x1="816" y1="245" x2="822.5" y2="245" stroke="#d8d8d8" stroke-width="1.3"/>
<text x="816.3" y="250.3" font-size="15.4" text-anchor="end">0</text>
<line x1="816" y1="288.5" x2="822.5" y2="288.5" stroke="#d8d8d8" stroke-width="1.3"/>
<text x="816.3" y="293.8" font-size="15.4" text-anchor="end">-1</text>
<line x1="816" y1="332" x2="822.5" y2="332" stroke="#d8d8d8" stroke-width="1.3"/>
<text x="816.3" y="337.3" font-size="15.4" text-anchor="end">-2</text>
<line x1="816" y1="375.5" x2="822.5" y2="375.5" stroke="#d8d8d8" stroke-width="1.3"/>
<text x="816.3" y="380.8" font-size="15.4" text-anchor="end">-3</text>
<line x1="816" y1="417.8" x2="822.5" y2="417.8" stroke="#d8d8d8" stroke-width="1.3"/>
<text x="816.3" y="423.1" font-size="15.4" text-anchor="end">-4</text>
<text x="870.9" y="66.3" font-size="16" textLength="49.6" lengthAdjust="spacingAndGlyphs">Delta H</text>
<rect x="411.8" y="424.4" width="589.4" height="203.2" fill="#000"/>
<clipPath id="swc"><rect x="411.8" y="424.4" width="589.4" height="203.2"/></clipPath>
<g clip-path="url(#swc)">
<rect x="430" y="432" width="60.2" height="62" fill="#fafafa"/>
<rect x="431.3" y="433.3" width="57.6" height="59.4" fill="#f4f6ff"/>
<rect x="431.8" y="433.8" width="56.6" height="58.4" fill="none" stroke="#000" stroke-opacity=".2" stroke-width="1"/>
<rect x="430" y="511" width="60.2" height="62" fill="#fafafa"/>
<rect x="431.3" y="512.3" width="57.6" height="59.4" fill="#f6f6f6"/>
<rect x="431.8" y="512.8" width="56.6" height="58.4" fill="none" stroke="#000" stroke-opacity=".2" stroke-width="1"/>
<text x="443.1" y="588.0" font-size="13" textLength="34.0" lengthAdjust="spacingAndGlyphs" fill="#ffffff">White</text>
<rect x="500" y="432" width="60.2" height="62" fill="#fafafa"/>
<rect x="501.3" y="433.3" width="57.6" height="59.4" fill="#e2e4ec"/>
<rect x="501.8" y="433.8" width="56.6" height="58.4" fill="none" stroke="#000" stroke-opacity=".2" stroke-width="1"/>
<rect x="500" y="511" width="60.2" height="62" fill="#fafafa"/>
<rect x="501.3" y="512.3" width="57.6" height="59.4" fill="#e6e6e6"/>
<rect x="501.8" y="512.8" width="56.6" height="58.4" fill="none" stroke="#000" stroke-opacity=".2" stroke-width="1"/>
<text x="508.5" y="588.0" font-size="13" textLength="43.3" lengthAdjust="spacingAndGlyphs" fill="#ffffff">Gray 80</text>
<rect x="570" y="432" width="60.2" height="62" fill="#fafafa"/>
<rect x="571.3" y="433.3" width="57.6" height="59.4" fill="#d0d0d8"/>
<rect x="571.8" y="433.8" width="56.6" height="58.4" fill="none" stroke="#000" stroke-opacity=".2" stroke-width="1"/>
<rect x="570" y="511" width="60.2" height="62" fill="#fafafa"/>
<rect x="571.3" y="512.3" width="57.6" height="59.4" fill="#d2d2d2"/>
<rect x="571.8" y="512.8" width="56.6" height="58.4" fill="none" stroke="#000" stroke-opacity=".2" stroke-width="1"/>
<text x="578.5" y="588.0" font-size="13" textLength="43.3" lengthAdjust="spacingAndGlyphs" fill="#ffffff">Gray 65</text>
<rect x="640" y="432" width="60.2" height="62" fill="#fafafa"/>
<rect x="641.3" y="433.3" width="57.6" height="59.4" fill="#b9b9be"/>
<rect x="641.8" y="433.8" width="56.6" height="58.4" fill="none" stroke="#000" stroke-opacity=".2" stroke-width="1"/>
<rect x="640" y="511" width="60.2" height="62" fill="#fafafa"/>
<rect x="641.3" y="512.3" width="57.6" height="59.4" fill="#bababa"/>
<rect x="641.8" y="512.8" width="56.6" height="58.4" fill="none" stroke="#000" stroke-opacity=".2" stroke-width="1"/>
<text x="648.5" y="588.0" font-size="13" textLength="43.3" lengthAdjust="spacingAndGlyphs" fill="#ffffff">Gray 50</text>
<rect x="710" y="432" width="60.2" height="62" fill="#fafafa"/>
<rect x="711.3" y="433.3" width="57.6" height="59.4" fill="#a09fa3"/>
<rect x="711.8" y="433.8" width="56.6" height="58.4" fill="none" stroke="#000" stroke-opacity=".2" stroke-width="1"/>
<rect x="710" y="511" width="60.2" height="62" fill="#fafafa"/>
<rect x="711.3" y="512.3" width="57.6" height="59.4" fill="#a0a0a0"/>
<rect x="711.8" y="512.8" width="56.6" height="58.4" fill="none" stroke="#000" stroke-opacity=".2" stroke-width="1"/>
<text x="718.5" y="588.0" font-size="13" textLength="43.3" lengthAdjust="spacingAndGlyphs" fill="#ffffff">Gray 35</text>
<rect x="780" y="432" width="60.2" height="62" fill="#fafafa"/>
<rect x="781.3" y="433.3" width="57.6" height="59.4" fill="#000000"/>
<rect x="781.8" y="433.8" width="56.6" height="58.4" fill="none" stroke="#000" stroke-opacity=".2" stroke-width="1"/>
<rect x="780" y="511" width="60.2" height="62" fill="#fafafa"/>
<rect x="781.3" y="512.3" width="57.6" height="59.4" fill="#000000"/>
<rect x="781.8" y="512.8" width="56.6" height="58.4" fill="none" stroke="#000" stroke-opacity=".2" stroke-width="1"/>
<text x="794.6" y="588.0" font-size="13" textLength="30.9" lengthAdjust="spacingAndGlyphs" fill="#ffffff">Black</text>
<rect x="850" y="432" width="60.2" height="62" fill="#fafafa"/>
<rect x="851.3" y="433.3" width="57.6" height="59.4" fill="#774b3f"/>
<rect x="851.8" y="433.8" width="56.6" height="58.4" fill="none" stroke="#000" stroke-opacity=".2" stroke-width="1"/>
<rect x="850" y="511" width="60.2" height="62" fill="#fafafa"/>
<rect x="851.3" y="512.3" width="57.6" height="59.4" fill="#715242"/>
<rect x="851.8" y="512.8" width="56.6" height="58.4" fill="none" stroke="#000" stroke-opacity=".2" stroke-width="1"/>
<text x="853.6" y="588.0" font-size="13" textLength="53.0" lengthAdjust="spacingAndGlyphs" fill="#ffffff">Dark Skin</text>
<rect x="920" y="432" width="60.2" height="62" fill="#fafafa"/>
<rect x="921.3" y="433.3" width="57.6" height="59.4" fill="#c49384"/>
<rect x="921.8" y="433.8" width="56.6" height="58.4" fill="none" stroke="#000" stroke-opacity=".2" stroke-width="1"/>
<rect x="920" y="511" width="60.2" height="62" fill="#fafafa"/>
<rect x="921.3" y="512.3" width="57.6" height="59.4" fill="#c2937e"/>
<rect x="921.8" y="512.8" width="56.6" height="58.4" fill="none" stroke="#000" stroke-opacity=".2" stroke-width="1"/>
<text x="923.2" y="588.0" font-size="13" textLength="53.8" lengthAdjust="spacingAndGlyphs" fill="#ffffff">Light Skin</text>
<rect x="990" y="432" width="60.2" height="62" fill="#fafafa"/>
<rect x="991.3" y="433.3" width="57.6" height="59.4" fill="#5279a1"/>
<rect x="991.8" y="433.8" width="56.6" height="58.4" fill="none" stroke="#000" stroke-opacity=".2" stroke-width="1"/>
<rect x="990" y="511" width="60.2" height="62" fill="#fafafa"/>
<rect x="991.3" y="512.3" width="57.6" height="59.4" fill="#5c7ba0"/>
<rect x="991.8" y="512.8" width="56.6" height="58.4" fill="none" stroke="#000" stroke-opacity=".2" stroke-width="1"/>
<text x="996.1" y="588.0" font-size="13" textLength="48.0" lengthAdjust="spacingAndGlyphs" fill="#ffffff">Blue Sky</text>
</g>
<text transform="translate(424.9,463.3) rotate(-90)" font-size="13" text-anchor="middle" fill="#fff" textLength="36" lengthAdjust="spacingAndGlyphs">Actual</text>
<text transform="translate(424.9,541.9) rotate(-90)" font-size="13" text-anchor="middle" fill="#fff" textLength="36" lengthAdjust="spacingAndGlyphs">Target</text>
<rect x="412" y="611" width="589" height="17" fill="#606060" rx="2"/>
<rect x="430.5" y="612.2" width="151" height="14.3" fill="#464646" rx="6"/>
<rect x="412.6" y="612.2" width="14.6" height="14.2" rx="2.5" fill="#767676" stroke="#8a8a8a" stroke-width="0.8"/>
<rect x="985.4" y="612.2" width="14.6" height="14.2" rx="2.5" fill="#767676" stroke="#8a8a8a" stroke-width="0.8"/>
<path d="M416.2 619.3l6.2-5v10z" fill="#3c3c3c"/>
<path d="M996 619.3l-6.2-5v10z" fill="#3c3c3c"/>
<rect x="1508.3" y="84.3" width="190.6" height="147.6" fill="none" stroke="#9a9a9a" stroke-width="1.3"/>
<rect x="1051.3" y="76.4" width="654.4" height="501.4" fill="none" stroke="#989898" stroke-width="1.6"/>
<line x1="1051.8" y1="578" x2="1051.8" y2="583.5" stroke="#dcdcdc" stroke-width="1.5"/>
<text x="1051.8" y="598.9" font-size="15.4" text-anchor="middle">0</text>
<line x1="1045.7" y1="578.2" x2="1051" y2="578.2" stroke="#dcdcdc" stroke-width="1.6"/>
<text x="1045.5" y="583.5" font-size="15.4" text-anchor="end">0</text>
<line x1="1129.53" y1="578" x2="1129.53" y2="583.5" stroke="#dcdcdc" stroke-width="1.5"/>
<text x="1129.5" y="598.9" font-size="15.4" text-anchor="middle">0,1</text>
<line x1="1045.7" y1="518.65" x2="1051" y2="518.65" stroke="#dcdcdc" stroke-width="1.6"/>
<text x="1045.5" y="524.0" font-size="15.4" text-anchor="end">0,1</text>
<line x1="1207.26" y1="578" x2="1207.26" y2="583.5" stroke="#dcdcdc" stroke-width="1.5"/>
<text x="1207.3" y="598.9" font-size="15.4" text-anchor="middle">0,2</text>
<line x1="1045.7" y1="459.1" x2="1051" y2="459.1" stroke="#dcdcdc" stroke-width="1.6"/>
<text x="1045.5" y="464.4" font-size="15.4" text-anchor="end">0,2</text>
<line x1="1284.99" y1="578" x2="1284.99" y2="583.5" stroke="#dcdcdc" stroke-width="1.5"/>
<text x="1285.0" y="598.9" font-size="15.4" text-anchor="middle">0,3</text>
<line x1="1045.7" y1="399.55" x2="1051" y2="399.55" stroke="#dcdcdc" stroke-width="1.6"/>
<text x="1045.5" y="404.9" font-size="15.4" text-anchor="end">0,3</text>
<line x1="1362.72" y1="578" x2="1362.72" y2="583.5" stroke="#dcdcdc" stroke-width="1.5"/>
<text x="1362.7" y="598.9" font-size="15.4" text-anchor="middle">0,4</text>
<line x1="1045.7" y1="340" x2="1051" y2="340" stroke="#dcdcdc" stroke-width="1.6"/>
<text x="1045.5" y="345.3" font-size="15.4" text-anchor="end">0,4</text>
<line x1="1440.45" y1="578" x2="1440.45" y2="583.5" stroke="#dcdcdc" stroke-width="1.5"/>
<text x="1440.4" y="598.9" font-size="15.4" text-anchor="middle">0,5</text>
<line x1="1045.7" y1="280.45" x2="1051" y2="280.45" stroke="#dcdcdc" stroke-width="1.6"/>
<text x="1045.5" y="285.8" font-size="15.4" text-anchor="end">0,5</text>
<line x1="1518.18" y1="578" x2="1518.18" y2="583.5" stroke="#dcdcdc" stroke-width="1.5"/>
<text x="1518.2" y="598.9" font-size="15.4" text-anchor="middle">0,6</text>
<line x1="1045.7" y1="220.9" x2="1051" y2="220.9" stroke="#dcdcdc" stroke-width="1.6"/>
<text x="1045.5" y="226.2" font-size="15.4" text-anchor="end">0,6</text>
<line x1="1595.91" y1="578" x2="1595.91" y2="583.5" stroke="#dcdcdc" stroke-width="1.5"/>
<text x="1595.9" y="598.9" font-size="15.4" text-anchor="middle">0,7</text>
<line x1="1045.7" y1="161.35" x2="1051" y2="161.35" stroke="#dcdcdc" stroke-width="1.6"/>
<text x="1045.5" y="166.7" font-size="15.4" text-anchor="end">0,7</text>
<line x1="1673.64" y1="578" x2="1673.64" y2="583.5" stroke="#dcdcdc" stroke-width="1.5"/>
<text x="1673.6" y="598.9" font-size="15.4" text-anchor="middle">0,8</text>
<line x1="1045.7" y1="101.8" x2="1051" y2="101.8" stroke="#dcdcdc" stroke-width="1.6"/>
<text x="1045.5" y="107.1" font-size="15.4" text-anchor="end">0,8</text>
<text x="1326.9" y="71.8" font-size="16" textLength="77.3" lengthAdjust="spacingAndGlyphs">CIE 1931 xy</text>
<rect x="1421.8" y="536.7" width="280.4" height="28.5" fill="#303030"/>
<text x="1451.4" y="558.2" font-size="21" textLength="218.8" lengthAdjust="spacingAndGlyphs" fill="#f0f0f0">RGB Triplet: 255, 255, 0</text>
<rect x="1250.3" y="158.5" width="13.6" height="13.6" fill="none" stroke="#fff" stroke-width="1.5"/>
<rect x="1384.7" y="250.7" width="13.6" height="13.6" fill="none" stroke="#fff" stroke-width="1.5"/>
<rect x="1283.5" y="279.4" width="13.6" height="13.6" fill="none" stroke="#fff" stroke-width="1.5"/>
<rect x="1337.2" y="273.8" width="13.6" height="13.6" fill="none" stroke="#fff" stroke-width="1.5"/>
<rect x="1307.6" y="315.7" width="13.6" height="13.6" fill="none" stroke="#fff" stroke-width="1.5"/>
<rect x="1393.0" y="287.9" width="13.6" height="13.6" fill="none" stroke="#fff" stroke-width="1.5"/>
<rect x="1411.3" y="305.7" width="13.6" height="13.6" fill="none" stroke="#fff" stroke-width="1.5"/>
<rect x="1442.1" y="328.3" width="13.6" height="13.6" fill="none" stroke="#fff" stroke-width="1.5"/>
<rect x="1248.8" y="357.7" width="13.6" height="13.6" fill="none" stroke="#fff" stroke-width="1.5"/>
<rect x="1199.6" y="371.6" width="13.6" height="13.6" fill="none" stroke="#fff" stroke-width="1.5"/>
<rect x="1339.7" y="358.5" width="13.6" height="13.6" fill="none" stroke="#fff" stroke-width="1.5"/>
<rect x="1356.9" y="356.2" width="13.6" height="13.6" fill="none" stroke="#fff" stroke-width="1.5"/>
<rect x="1400.3" y="382.8" width="13.6" height="13.6" fill="none" stroke="#fff" stroke-width="1.5"/>
<rect x="1463.3" y="378.8" width="13.6" height="13.6" fill="none" stroke="#fff" stroke-width="1.5"/>
<rect x="1574.3" y="378.8" width="13.6" height="13.6" fill="none" stroke="#fff" stroke-width="1.5"/>
<rect x="1198.3" y="412.2" width="13.6" height="13.6" fill="none" stroke="#fff" stroke-width="1.5"/>
<rect x="1238.7" y="410.7" width="13.6" height="13.6" fill="none" stroke="#fff" stroke-width="1.5"/>
<rect x="1252.9" y="417.8" width="13.6" height="13.6" fill="none" stroke="#fff" stroke-width="1.5"/>
<rect x="1268.5" y="436.4" width="13.6" height="13.6" fill="none" stroke="#fff" stroke-width="1.5"/>
<rect x="1212.2" y="454.2" width="13.6" height="13.6" fill="none" stroke="#fff" stroke-width="1.5"/>
<rect x="1195.7" y="485.2" width="13.6" height="13.6" fill="none" stroke="#fff" stroke-width="1.5"/>
<rect x="1161.7" y="534.2" width="13.6" height="13.6" fill="none" stroke="#fff" stroke-width="1.5"/>
<rect x="1334.2" y="423.8" width="13.6" height="13.6" fill="none" stroke="#fff" stroke-width="1.5"/>
<rect x="1306.2" y="479.7" width="13.6" height="13.6" fill="none" stroke="#fff" stroke-width="1.5"/>
<rect x="1288" y="372.8" width="14.1" height="14.1" fill="none" stroke="#000" stroke-width="2"/>
<circle cx="1240.1" cy="150.2" r="4.5" fill="#00ff00" stroke="#000" stroke-width="1.1"/>
<circle cx="1396.1" cy="257.8" r="4.5" fill="#ffff00" stroke="#000" stroke-width="1.1"/>
<circle cx="1284.8" cy="280.3" r="4.5" fill="#629658" stroke="#000" stroke-width="1.1"/>
<circle cx="1346.9" cy="279.9" r="4.5" fill="#a9b85a" stroke="#000" stroke-width="1.1"/>
<circle cx="1313.0" cy="318.0" r="4.5" fill="#5a6845" stroke="#000" stroke-width="1.1"/>
<circle cx="1406.9" cy="296.0" r="4.5" fill="#dfc555" stroke="#000" stroke-width="1.1"/>
<circle cx="1427.0" cy="314.1" r="4.5" fill="#d9a348" stroke="#000" stroke-width="1.1"/>
<circle cx="1457.4" cy="335.2" r="4.5" fill="#c88443" stroke="#000" stroke-width="1.1"/>
<circle cx="1246.7" cy="370.0" r="4.5" fill="#7fb3a3" stroke="#000" stroke-width="1.1"/>
<circle cx="1190.9" cy="384.9" r="4.5" fill="#00ffff" stroke="#000" stroke-width="1.1"/>
<circle cx="1344.7" cy="370.0" r="4.5" fill="#b89284" stroke="#000" stroke-width="1.1"/>
<circle cx="1376.2" cy="364.0" r="4.5" fill="#755448" stroke="#000" stroke-width="1.1"/>
<circle cx="1413.0" cy="392.5" r="4.5" fill="#b25864" stroke="#000" stroke-width="1.1"/>
<circle cx="1487.1" cy="387.0" r="4.5" fill="#a2434a" stroke="#000" stroke-width="1.1"/>
<circle cx="1579.8" cy="385.2" r="4.5" fill="#ff0000" stroke="#000" stroke-width="1.1"/>
<circle cx="1190.0" cy="425.2" r="4.5" fill="#3b8ba0" stroke="#000" stroke-width="1.1"/>
<circle cx="1236.0" cy="421.9" r="4.5" fill="#6c82a6" stroke="#000" stroke-width="1.1"/>
<circle cx="1254.0" cy="429.0" r="4.5" fill="#8a88b0" stroke="#000" stroke-width="1.1"/>
<circle cx="1267.9" cy="454.0" r="4.5" fill="#5c4468" stroke="#000" stroke-width="1.1"/>
<circle cx="1206.5" cy="471.0" r="4.5" fill="#5862a6" stroke="#000" stroke-width="1.1"/>
<circle cx="1186.8" cy="504.8" r="4.5" fill="#42448e" stroke="#000" stroke-width="1.1"/>
<circle cx="1157.1" cy="544.8" r="4.5" fill="#0000ff" stroke="#000" stroke-width="1.1"/>
<circle cx="1342.6" cy="435.9" r="4.5" fill="#b0648e" stroke="#000" stroke-width="1.1"/>
<circle cx="1310.1" cy="488.1" r="4.5" fill="#ff00ff" stroke="#000" stroke-width="1.1"/>
<circle cx="1310.1" cy="377.8" r="4.9" fill="#000"/>
<circle cx="1290.0" cy="384.9" r="4.4" fill="#d4d4d4" stroke="#000" stroke-width="1.1"/>
<circle cx="1291.8" cy="384.9" r="4.4" fill="#9c9c9c" stroke="#000" stroke-width="1.1"/>
<rect x="1596.2" y="150.6" width="13.8" height="13.8" fill="none" stroke="#fff" stroke-width="1.5"/>
<circle cx="1618.6" cy="157.2" r="4.3" fill="#ffff00" stroke="#000" stroke-width="1.1"/>
<rect x="337" y="629" width="1376.2" height="28.9" fill="url(#th)"/>
<rect x="328.2" y="629" width="8.8" height="28.9" fill="#000"/>
<rect x="337" y="657.9" width="1376.2" height="26.85" fill="#424242"/>
<rect x="337" y="684.7" width="1376.2" height="26.55" fill="#808080"/>
<rect x="337" y="711.2" width="1376.2" height="26.85" fill="#424242"/>
<rect x="337" y="738" width="1376.2" height="26.65" fill="#808080"/>
<rect x="337" y="764.6" width="1376.2" height="26.65" fill="#424242"/>
<rect x="337" y="791.2" width="1376.2" height="26.65" fill="#808080"/>
<rect x="337" y="817.8" width="1376.2" height="26.05" fill="#424242"/>
<rect x="328.2" y="657.9" width="8.8" height="26.85" fill="url(#tl)"/>
<rect x="328.2" y="684.7" width="8.8" height="26.55" fill="url(#tl)"/>
<rect x="328.2" y="711.2" width="8.8" height="26.85" fill="url(#tl)"/>
<rect x="328.2" y="738" width="8.8" height="26.65" fill="url(#tl)"/>
<rect x="328.2" y="764.6" width="8.8" height="26.65" fill="url(#tl)"/>
<rect x="328.2" y="791.2" width="8.8" height="26.65" fill="url(#tl)"/>
<rect x="328.2" y="817.8" width="8.8" height="26.05" fill="url(#tl)"/>
<g fill="#f2f2f2" stroke="#f2f2f2" stroke-width=".2">
<text x="407.2" y="648.7" font-size="15.7" textLength="25.3" lengthAdjust="spacingAndGlyphs">White</text>
<text x="442.4" y="648.7" font-size="15.7" textLength="31.6" lengthAdjust="spacingAndGlyphs">Gray 80</text>
<text x="479.0" y="648.7" font-size="15.7" textLength="31.6" lengthAdjust="spacingAndGlyphs">Gray 65</text>
<text x="515.6" y="648.7" font-size="15.7" textLength="31.6" lengthAdjust="spacingAndGlyphs">Gray 50</text>
<text x="552.0" y="648.7" font-size="15.7" textLength="31.6" lengthAdjust="spacingAndGlyphs">Gray 35</text>
<text x="588.4" y="648.7" font-size="15.7" textLength="21.5" lengthAdjust="spacingAndGlyphs">Black</text>
<text x="615.2" y="648.7" font-size="15.7" textLength="38.0" lengthAdjust="spacingAndGlyphs">Dark Skin</text>
<text x="658.5" y="648.7" font-size="15.7" textLength="38.9" lengthAdjust="spacingAndGlyphs">Light Skin</text>
<text x="702.4" y="648.7" font-size="15.7" textLength="34.1" lengthAdjust="spacingAndGlyphs">Blue Sky</text>
<text x="741.6" y="648.7" font-size="15.7" textLength="29.1" lengthAdjust="spacingAndGlyphs">Foliage</text>
<text x="775.7" y="648.7" font-size="15.7" textLength="48.2" lengthAdjust="spacingAndGlyphs">Blue Flower</text>
<text x="829.5" y="648.7" font-size="15.7" textLength="51.7" lengthAdjust="spacingAndGlyphs">Bluish Green</text>
<text x="886.5" y="648.7" font-size="15.7" textLength="29.6" lengthAdjust="spacingAndGlyphs">Orange</text>
<text x="921.7" y="648.7" font-size="15.7" textLength="53.4" lengthAdjust="spacingAndGlyphs">Purplish Blue</text>
<text x="980.4" y="648.7" font-size="15.7" textLength="58.4" lengthAdjust="spacingAndGlyphs">Moderate Red</text>
<text x="1043.9" y="648.7" font-size="15.7" textLength="26.8" lengthAdjust="spacingAndGlyphs">Purple</text>
<text x="1075.8" y="648.7" font-size="15.7" textLength="53.7" lengthAdjust="spacingAndGlyphs">Yellow Green</text>
<text x="1134.5" y="648.7" font-size="15.7" textLength="58.7" lengthAdjust="spacingAndGlyphs">Orange Yellow</text>
<text x="1198.0" y="648.7" font-size="15.7" textLength="18.2" lengthAdjust="spacingAndGlyphs">Blue</text>
<text x="1227.9" y="648.7" font-size="15.7" textLength="25.4" lengthAdjust="spacingAndGlyphs">Green</text>
<text x="1258.2" y="648.7" font-size="15.7" textLength="15.1" lengthAdjust="spacingAndGlyphs">Red</text>
<text x="1287.9" y="648.7" font-size="15.7" textLength="26.6" lengthAdjust="spacingAndGlyphs">Yellow</text>
<text x="1323.4" y="648.7" font-size="15.7" textLength="35.8" lengthAdjust="spacingAndGlyphs">Magenta</text>
<text x="1364.8" y="648.7" font-size="15.7" textLength="19.6" lengthAdjust="spacingAndGlyphs">Cyan</text>
<text x="1394.7" y="648.7" font-size="15.7" textLength="40.5" lengthAdjust="spacingAndGlyphs">100% Red</text>
<text x="1440.2" y="648.7" font-size="15.7" textLength="49.8" lengthAdjust="spacingAndGlyphs">100% Green</text>
<text x="1495.0" y="648.7" font-size="15.7" textLength="43.1" lengthAdjust="spacingAndGlyphs">100% Blue</text>
<text x="1543.4" y="648.7" font-size="15.7" textLength="44.5" lengthAdjust="spacingAndGlyphs">100% Cyan</text>
<text x="1593.2" y="648.7" font-size="15.7" textLength="60.9" lengthAdjust="spacingAndGlyphs">100% Magenta</text>
<text x="1659.4" y="648.7" font-size="15.7" textLength="51.4" lengthAdjust="spacingAndGlyphs">100% Yellow</text>
<text x="339.0" y="677.7" font-size="17.1" textLength="34.0" lengthAdjust="spacingAndGlyphs">x: CIE31</text>
<text x="407.1" y="677.7" font-size="17.1" textLength="18.2" lengthAdjust="spacingAndGlyphs">0,31</text>
<text x="442.3" y="677.7" font-size="17.1" textLength="18.2" lengthAdjust="spacingAndGlyphs">0,31</text>
<text x="478.9" y="677.7" font-size="17.1" textLength="18.2" lengthAdjust="spacingAndGlyphs">0,31</text>
<text x="515.5" y="677.7" font-size="17.1" textLength="18.2" lengthAdjust="spacingAndGlyphs">0,31</text>
<text x="551.9" y="677.7" font-size="17.1" textLength="18.2" lengthAdjust="spacingAndGlyphs">0,31</text>
<text x="588.3" y="677.7" font-size="17.1" textLength="18.2" lengthAdjust="spacingAndGlyphs">0,33</text>
<text x="615.1" y="677.7" font-size="17.1" textLength="18.2" lengthAdjust="spacingAndGlyphs">0,42</text>
<text x="658.4" y="677.7" font-size="17.1" textLength="18.2" lengthAdjust="spacingAndGlyphs">0,38</text>
<text x="702.3" y="677.7" font-size="17.1" textLength="18.2" lengthAdjust="spacingAndGlyphs">0,24</text>
<text x="741.5" y="677.7" font-size="17.1" textLength="18.2" lengthAdjust="spacingAndGlyphs">0,34</text>
<text x="775.6" y="677.7" font-size="17.1" textLength="18.2" lengthAdjust="spacingAndGlyphs">0,26</text>
<text x="829.4" y="677.7" font-size="17.1" textLength="18.2" lengthAdjust="spacingAndGlyphs">0,25</text>
<text x="886.4" y="677.7" font-size="17.1" textLength="18.2" lengthAdjust="spacingAndGlyphs">0,52</text>
<text x="921.6" y="677.7" font-size="17.1" textLength="18.2" lengthAdjust="spacingAndGlyphs">0,20</text>
<text x="980.3" y="677.7" font-size="17.1" textLength="18.2" lengthAdjust="spacingAndGlyphs">0,46</text>
<text x="1043.8" y="677.7" font-size="17.1" textLength="18.2" lengthAdjust="spacingAndGlyphs">0,28</text>
<text x="1075.7" y="677.7" font-size="17.1" textLength="18.2" lengthAdjust="spacingAndGlyphs">0,38</text>
<text x="1134.4" y="677.7" font-size="17.1" textLength="18.2" lengthAdjust="spacingAndGlyphs">0,48</text>
<text x="1197.9" y="677.7" font-size="17.1" textLength="18.2" lengthAdjust="spacingAndGlyphs">0,17</text>
<text x="1227.8" y="677.7" font-size="17.1" textLength="18.2" lengthAdjust="spacingAndGlyphs">0,30</text>
<text x="1258.1" y="677.7" font-size="17.1" textLength="18.2" lengthAdjust="spacingAndGlyphs">0,56</text>
<text x="1287.8" y="677.7" font-size="17.1" textLength="18.2" lengthAdjust="spacingAndGlyphs">0,46</text>
<text x="1323.3" y="677.7" font-size="17.1" textLength="18.2" lengthAdjust="spacingAndGlyphs">0,37</text>
<text x="1364.7" y="677.7" font-size="17.1" textLength="18.2" lengthAdjust="spacingAndGlyphs">0,18</text>
<text x="1394.6" y="677.7" font-size="17.1" textLength="18.2" lengthAdjust="spacingAndGlyphs">0,68</text>
<text x="1440.1" y="677.7" font-size="17.1" textLength="18.2" lengthAdjust="spacingAndGlyphs">0,24</text>
<text x="1494.9" y="677.7" font-size="17.1" textLength="18.2" lengthAdjust="spacingAndGlyphs">0,14</text>
<text x="1543.3" y="677.7" font-size="17.1" textLength="18.2" lengthAdjust="spacingAndGlyphs">0,18</text>
<text x="1593.1" y="677.7" font-size="17.1" textLength="18.2" lengthAdjust="spacingAndGlyphs">0,33</text>
<text x="1659.3" y="677.7" font-size="17.1" textLength="18.2" lengthAdjust="spacingAndGlyphs">0,44</text>
<text x="339.0" y="704.5" font-size="17.1" textLength="34.0" lengthAdjust="spacingAndGlyphs">y: CIE31</text>
<text x="407.1" y="704.5" font-size="17.1" textLength="18.2" lengthAdjust="spacingAndGlyphs">0,32</text>
<text x="442.3" y="704.5" font-size="17.1" textLength="18.2" lengthAdjust="spacingAndGlyphs">0,32</text>
<text x="478.9" y="704.5" font-size="17.1" textLength="18.2" lengthAdjust="spacingAndGlyphs">0,32</text>
<text x="515.5" y="704.5" font-size="17.1" textLength="18.2" lengthAdjust="spacingAndGlyphs">0,32</text>
<text x="551.9" y="704.5" font-size="17.1" textLength="18.2" lengthAdjust="spacingAndGlyphs">0,32</text>
<text x="588.3" y="704.5" font-size="17.1" textLength="18.2" lengthAdjust="spacingAndGlyphs">0,33</text>
<text x="615.1" y="704.5" font-size="17.1" textLength="18.2" lengthAdjust="spacingAndGlyphs">0,36</text>
<text x="658.4" y="704.5" font-size="17.1" textLength="18.2" lengthAdjust="spacingAndGlyphs">0,35</text>
<text x="702.3" y="704.5" font-size="17.1" textLength="18.2" lengthAdjust="spacingAndGlyphs">0,26</text>
<text x="741.5" y="704.5" font-size="17.1" textLength="18.2" lengthAdjust="spacingAndGlyphs">0,43</text>
<text x="775.6" y="704.5" font-size="17.1" textLength="18.2" lengthAdjust="spacingAndGlyphs">0,25</text>
<text x="829.4" y="704.5" font-size="17.1" textLength="18.2" lengthAdjust="spacingAndGlyphs">0,35</text>
<text x="886.4" y="704.5" font-size="17.1" textLength="18.2" lengthAdjust="spacingAndGlyphs">0,41</text>
<text x="921.6" y="704.5" font-size="17.1" textLength="18.2" lengthAdjust="spacingAndGlyphs">0,18</text>
<text x="980.3" y="704.5" font-size="17.1" textLength="18.2" lengthAdjust="spacingAndGlyphs">0,31</text>
<text x="1043.8" y="704.5" font-size="17.1" textLength="18.2" lengthAdjust="spacingAndGlyphs">0,21</text>
<text x="1075.7" y="704.5" font-size="17.1" textLength="18.2" lengthAdjust="spacingAndGlyphs">0,50</text>
<text x="1134.4" y="704.5" font-size="17.1" textLength="18.2" lengthAdjust="spacingAndGlyphs">0,44</text>
<text x="1197.9" y="704.5" font-size="17.1" textLength="18.2" lengthAdjust="spacingAndGlyphs">0,12</text>
<text x="1227.8" y="704.5" font-size="17.1" textLength="18.2" lengthAdjust="spacingAndGlyphs">0,50</text>
<text x="1258.1" y="704.5" font-size="17.1" textLength="18.2" lengthAdjust="spacingAndGlyphs">0,32</text>
<text x="1287.8" y="704.5" font-size="17.1" textLength="18.2" lengthAdjust="spacingAndGlyphs">0,47</text>
<text x="1323.3" y="704.5" font-size="17.1" textLength="18.2" lengthAdjust="spacingAndGlyphs">0,24</text>
<text x="1364.7" y="704.5" font-size="17.1" textLength="18.2" lengthAdjust="spacingAndGlyphs">0,25</text>
<text x="1394.6" y="704.5" font-size="17.1" textLength="18.2" lengthAdjust="spacingAndGlyphs">0,32</text>
<text x="1440.1" y="704.5" font-size="17.1" textLength="18.2" lengthAdjust="spacingAndGlyphs">0,72</text>
<text x="1494.9" y="704.5" font-size="17.1" textLength="18.2" lengthAdjust="spacingAndGlyphs">0,05</text>
<text x="1543.3" y="704.5" font-size="17.1" textLength="18.2" lengthAdjust="spacingAndGlyphs">0,32</text>
<text x="1593.1" y="704.5" font-size="17.1" textLength="18.2" lengthAdjust="spacingAndGlyphs">0,15</text>
<text x="1659.3" y="704.5" font-size="17.1" textLength="18.2" lengthAdjust="spacingAndGlyphs">0,54</text>
<text x="339.0" y="731.0" font-size="17.1" textLength="5.6" lengthAdjust="spacingAndGlyphs">Y</text>
<text x="407.1" y="731.0" font-size="17.1" textLength="30.0" lengthAdjust="spacingAndGlyphs">407,87</text>
<text x="442.3" y="731.0" font-size="17.1" textLength="30.0" lengthAdjust="spacingAndGlyphs">320,42</text>
<text x="478.9" y="731.0" font-size="17.1" textLength="30.0" lengthAdjust="spacingAndGlyphs">256,02</text>
<text x="515.5" y="731.0" font-size="17.1" textLength="30.0" lengthAdjust="spacingAndGlyphs">195,68</text>
<text x="551.9" y="731.0" font-size="17.1" textLength="30.0" lengthAdjust="spacingAndGlyphs">136,64</text>
<text x="588.3" y="731.0" font-size="17.1" textLength="18.2" lengthAdjust="spacingAndGlyphs">0,00</text>
<text x="615.1" y="731.0" font-size="17.1" textLength="24.1" lengthAdjust="spacingAndGlyphs">38,70</text>
<text x="658.4" y="731.0" font-size="17.1" textLength="30.0" lengthAdjust="spacingAndGlyphs">139,63</text>
<text x="702.3" y="731.0" font-size="17.1" textLength="24.1" lengthAdjust="spacingAndGlyphs">74,70</text>
<text x="741.5" y="731.0" font-size="17.1" textLength="24.1" lengthAdjust="spacingAndGlyphs">51,60</text>
<text x="775.6" y="731.0" font-size="17.1" textLength="24.1" lengthAdjust="spacingAndGlyphs">93,25</text>
<text x="829.4" y="731.0" font-size="17.1" textLength="30.0" lengthAdjust="spacingAndGlyphs">163,46</text>
<text x="886.4" y="731.0" font-size="17.1" textLength="30.0" lengthAdjust="spacingAndGlyphs">119,42</text>
<text x="921.6" y="731.0" font-size="17.1" textLength="24.1" lengthAdjust="spacingAndGlyphs">44,07</text>
<text x="980.3" y="731.0" font-size="17.1" textLength="24.1" lengthAdjust="spacingAndGlyphs">76,76</text>
<text x="1043.8" y="731.0" font-size="17.1" textLength="24.1" lengthAdjust="spacingAndGlyphs">25,10</text>
<text x="1075.7" y="731.0" font-size="17.1" textLength="30.0" lengthAdjust="spacingAndGlyphs">171,88</text>
<text x="1134.4" y="731.0" font-size="17.1" textLength="30.0" lengthAdjust="spacingAndGlyphs">177,22</text>
<text x="1197.9" y="731.0" font-size="17.1" textLength="24.1" lengthAdjust="spacingAndGlyphs">21,95</text>
<text x="1227.8" y="731.0" font-size="17.1" textLength="24.1" lengthAdjust="spacingAndGlyphs">89,96</text>
<text x="1258.1" y="731.0" font-size="17.1" textLength="24.1" lengthAdjust="spacingAndGlyphs">48,06</text>
<text x="1287.8" y="731.0" font-size="17.1" textLength="30.0" lengthAdjust="spacingAndGlyphs">242,50</text>
<text x="1323.3" y="731.0" font-size="17.1" textLength="24.1" lengthAdjust="spacingAndGlyphs">76,35</text>
<text x="1364.7" y="731.0" font-size="17.1" textLength="24.1" lengthAdjust="spacingAndGlyphs">73,05</text>
<text x="1394.6" y="731.0" font-size="17.1" textLength="30.0" lengthAdjust="spacingAndGlyphs">104,69</text>
<text x="1440.1" y="731.0" font-size="17.1" textLength="30.0" lengthAdjust="spacingAndGlyphs">278,43</text>
<text x="1494.9" y="731.0" font-size="17.1" textLength="24.1" lengthAdjust="spacingAndGlyphs">29,47</text>
<text x="1543.3" y="731.0" font-size="17.1" textLength="30.0" lengthAdjust="spacingAndGlyphs">305,60</text>
<text x="1593.1" y="731.0" font-size="17.1" textLength="30.0" lengthAdjust="spacingAndGlyphs">133,55</text>
<text x="1659.3" y="731.0" font-size="17.1" textLength="30.0" lengthAdjust="spacingAndGlyphs">382,50</text>
<text x="339.0" y="757.8" font-size="17.1" textLength="61.5" lengthAdjust="spacingAndGlyphs">Target x:CIE31</text>
<text x="407.1" y="757.8" font-size="17.1" textLength="18.2" lengthAdjust="spacingAndGlyphs">0,31</text>
<text x="442.3" y="757.8" font-size="17.1" textLength="18.2" lengthAdjust="spacingAndGlyphs">0,31</text>
<text x="478.9" y="757.8" font-size="17.1" textLength="18.2" lengthAdjust="spacingAndGlyphs">0,31</text>
<text x="515.5" y="757.8" font-size="17.1" textLength="18.2" lengthAdjust="spacingAndGlyphs">0,31</text>
<text x="551.9" y="757.8" font-size="17.1" textLength="18.2" lengthAdjust="spacingAndGlyphs">0,31</text>
<text x="588.3" y="757.8" font-size="17.1" textLength="18.2" lengthAdjust="spacingAndGlyphs">0,31</text>
<text x="615.1" y="757.8" font-size="17.1" textLength="18.2" lengthAdjust="spacingAndGlyphs">0,40</text>
<text x="658.4" y="757.8" font-size="17.1" textLength="18.2" lengthAdjust="spacingAndGlyphs">0,38</text>
<text x="702.3" y="757.8" font-size="17.1" textLength="18.2" lengthAdjust="spacingAndGlyphs">0,25</text>
<text x="741.5" y="757.8" font-size="17.1" textLength="18.2" lengthAdjust="spacingAndGlyphs">0,34</text>
<text x="775.6" y="757.8" font-size="17.1" textLength="18.2" lengthAdjust="spacingAndGlyphs">0,27</text>
<text x="829.4" y="757.8" font-size="17.1" textLength="18.2" lengthAdjust="spacingAndGlyphs">0,26</text>
<text x="886.4" y="757.8" font-size="17.1" textLength="18.2" lengthAdjust="spacingAndGlyphs">0,51</text>
<text x="921.6" y="757.8" font-size="17.1" textLength="18.2" lengthAdjust="spacingAndGlyphs">0,22</text>
<text x="980.3" y="757.8" font-size="17.1" textLength="18.2" lengthAdjust="spacingAndGlyphs">0,46</text>
<text x="1043.8" y="757.8" font-size="17.1" textLength="18.2" lengthAdjust="spacingAndGlyphs">0,29</text>
<text x="1075.7" y="757.8" font-size="17.1" textLength="18.2" lengthAdjust="spacingAndGlyphs">0,38</text>
<text x="1134.4" y="757.8" font-size="17.1" textLength="18.2" lengthAdjust="spacingAndGlyphs">0,47</text>
<text x="1197.9" y="757.8" font-size="17.1" textLength="18.2" lengthAdjust="spacingAndGlyphs">0,19</text>
<text x="1227.8" y="757.8" font-size="17.1" textLength="18.2" lengthAdjust="spacingAndGlyphs">0,31</text>
<text x="1258.1" y="757.8" font-size="17.1" textLength="18.2" lengthAdjust="spacingAndGlyphs">0,54</text>
<text x="1287.8" y="757.8" font-size="17.1" textLength="18.2" lengthAdjust="spacingAndGlyphs">0,45</text>
<text x="1323.3" y="757.8" font-size="17.1" textLength="18.2" lengthAdjust="spacingAndGlyphs">0,37</text>
<text x="1364.7" y="757.8" font-size="17.1" textLength="18.2" lengthAdjust="spacingAndGlyphs">0,20</text>
<text x="1394.6" y="757.8" font-size="17.1" textLength="18.2" lengthAdjust="spacingAndGlyphs">0,68</text>
<text x="1440.1" y="757.8" font-size="17.1" textLength="18.2" lengthAdjust="spacingAndGlyphs">0,27</text>
<text x="1494.9" y="757.8" font-size="17.1" textLength="18.2" lengthAdjust="spacingAndGlyphs">0,15</text>
<text x="1543.3" y="757.8" font-size="17.1" textLength="18.2" lengthAdjust="spacingAndGlyphs">0,20</text>
<text x="1593.1" y="757.8" font-size="17.1" textLength="18.2" lengthAdjust="spacingAndGlyphs">0,34</text>
<text x="1659.3" y="757.8" font-size="17.1" textLength="18.2" lengthAdjust="spacingAndGlyphs">0,44</text>
<text x="339.0" y="784.4" font-size="17.1" textLength="61.5" lengthAdjust="spacingAndGlyphs">Target y:CIE31</text>
<text x="407.1" y="784.4" font-size="17.1" textLength="18.2" lengthAdjust="spacingAndGlyphs">0,33</text>
<text x="442.3" y="784.4" font-size="17.1" textLength="18.2" lengthAdjust="spacingAndGlyphs">0,33</text>
<text x="478.9" y="784.4" font-size="17.1" textLength="18.2" lengthAdjust="spacingAndGlyphs">0,33</text>
<text x="515.5" y="784.4" font-size="17.1" textLength="18.2" lengthAdjust="spacingAndGlyphs">0,33</text>
<text x="551.9" y="784.4" font-size="17.1" textLength="18.2" lengthAdjust="spacingAndGlyphs">0,33</text>
<text x="588.3" y="784.4" font-size="17.1" textLength="18.2" lengthAdjust="spacingAndGlyphs">0,33</text>
<text x="615.1" y="784.4" font-size="17.1" textLength="18.2" lengthAdjust="spacingAndGlyphs">0,36</text>
<text x="658.4" y="784.4" font-size="17.1" textLength="18.2" lengthAdjust="spacingAndGlyphs">0,35</text>
<text x="702.3" y="784.4" font-size="17.1" textLength="18.2" lengthAdjust="spacingAndGlyphs">0,27</text>
<text x="741.5" y="784.4" font-size="17.1" textLength="18.2" lengthAdjust="spacingAndGlyphs">0,43</text>
<text x="775.6" y="784.4" font-size="17.1" textLength="18.2" lengthAdjust="spacingAndGlyphs">0,25</text>
<text x="829.4" y="784.4" font-size="17.1" textLength="18.2" lengthAdjust="spacingAndGlyphs">0,36</text>
<text x="886.4" y="784.4" font-size="17.1" textLength="18.2" lengthAdjust="spacingAndGlyphs">0,41</text>
<text x="921.6" y="784.4" font-size="17.1" textLength="18.2" lengthAdjust="spacingAndGlyphs">0,19</text>
<text x="980.3" y="784.4" font-size="17.1" textLength="18.2" lengthAdjust="spacingAndGlyphs">0,31</text>
<text x="1043.8" y="784.4" font-size="17.1" textLength="18.2" lengthAdjust="spacingAndGlyphs">0,22</text>
<text x="1075.7" y="784.4" font-size="17.1" textLength="18.2" lengthAdjust="spacingAndGlyphs">0,50</text>
<text x="1134.4" y="784.4" font-size="17.1" textLength="18.2" lengthAdjust="spacingAndGlyphs">0,44</text>
<text x="1197.9" y="784.4" font-size="17.1" textLength="18.2" lengthAdjust="spacingAndGlyphs">0,14</text>
<text x="1227.8" y="784.4" font-size="17.1" textLength="18.2" lengthAdjust="spacingAndGlyphs">0,49</text>
<text x="1258.1" y="784.4" font-size="17.1" textLength="18.2" lengthAdjust="spacingAndGlyphs">0,32</text>
<text x="1287.8" y="784.4" font-size="17.1" textLength="18.2" lengthAdjust="spacingAndGlyphs">0,47</text>
<text x="1323.3" y="784.4" font-size="17.1" textLength="18.2" lengthAdjust="spacingAndGlyphs">0,24</text>
<text x="1364.7" y="784.4" font-size="17.1" textLength="18.2" lengthAdjust="spacingAndGlyphs">0,26</text>
<text x="1394.6" y="784.4" font-size="17.1" textLength="18.2" lengthAdjust="spacingAndGlyphs">0,32</text>
<text x="1440.1" y="784.4" font-size="17.1" textLength="18.2" lengthAdjust="spacingAndGlyphs">0,69</text>
<text x="1494.9" y="784.4" font-size="17.1" textLength="18.2" lengthAdjust="spacingAndGlyphs">0,06</text>
<text x="1543.3" y="784.4" font-size="17.1" textLength="18.2" lengthAdjust="spacingAndGlyphs">0,33</text>
<text x="1593.1" y="784.4" font-size="17.1" textLength="18.2" lengthAdjust="spacingAndGlyphs">0,15</text>
<text x="1659.3" y="784.4" font-size="17.1" textLength="18.2" lengthAdjust="spacingAndGlyphs">0,54</text>
<text x="339.0" y="811.0" font-size="17.1" textLength="35.5" lengthAdjust="spacingAndGlyphs">Target Y</text>
<text x="407.1" y="811.0" font-size="17.1" textLength="30.0" lengthAdjust="spacingAndGlyphs">407,87</text>
<text x="442.3" y="811.0" font-size="17.1" textLength="30.0" lengthAdjust="spacingAndGlyphs">322,75</text>
<text x="478.9" y="811.0" font-size="17.1" textLength="30.0" lengthAdjust="spacingAndGlyphs">260,06</text>
<text x="515.5" y="811.0" font-size="17.1" textLength="30.0" lengthAdjust="spacingAndGlyphs">200,27</text>
<text x="551.9" y="811.0" font-size="17.1" textLength="30.0" lengthAdjust="spacingAndGlyphs">139,46</text>
<text x="588.3" y="811.0" font-size="17.1" textLength="18.2" lengthAdjust="spacingAndGlyphs">0,00</text>
<text x="615.1" y="811.0" font-size="17.1" textLength="24.1" lengthAdjust="spacingAndGlyphs">40,29</text>
<text x="658.4" y="811.0" font-size="17.1" textLength="30.0" lengthAdjust="spacingAndGlyphs">139,49</text>
<text x="702.3" y="811.0" font-size="17.1" textLength="24.1" lengthAdjust="spacingAndGlyphs">76,86</text>
<text x="741.5" y="811.0" font-size="17.1" textLength="24.1" lengthAdjust="spacingAndGlyphs">53,52</text>
<text x="775.6" y="811.0" font-size="17.1" textLength="24.1" lengthAdjust="spacingAndGlyphs">94,23</text>
<text x="829.4" y="811.0" font-size="17.1" textLength="30.0" lengthAdjust="spacingAndGlyphs">169,88</text>
<text x="886.4" y="811.0" font-size="17.1" textLength="30.0" lengthAdjust="spacingAndGlyphs">115,77</text>
<text x="921.6" y="811.0" font-size="17.1" textLength="24.1" lengthAdjust="spacingAndGlyphs">48,00</text>
<text x="980.3" y="811.0" font-size="17.1" textLength="24.1" lengthAdjust="spacingAndGlyphs">75,81</text>
<text x="1043.8" y="811.0" font-size="17.1" textLength="24.1" lengthAdjust="spacingAndGlyphs">27,93</text>
<text x="1075.7" y="811.0" font-size="17.1" textLength="30.0" lengthAdjust="spacingAndGlyphs">175,47</text>
<text x="1134.4" y="811.0" font-size="17.1" textLength="30.0" lengthAdjust="spacingAndGlyphs">175,79</text>
<text x="1197.9" y="811.0" font-size="17.1" textLength="24.1" lengthAdjust="spacingAndGlyphs">25,77</text>
<text x="1227.8" y="811.0" font-size="17.1" textLength="24.1" lengthAdjust="spacingAndGlyphs">92,41</text>
<text x="1258.1" y="811.0" font-size="17.1" textLength="24.1" lengthAdjust="spacingAndGlyphs">47,14</text>
<text x="1287.8" y="811.0" font-size="17.1" textLength="30.0" lengthAdjust="spacingAndGlyphs">242,37</text>
<text x="1323.3" y="811.0" font-size="17.1" textLength="24.1" lengthAdjust="spacingAndGlyphs">76,10</text>
<text x="1364.7" y="811.0" font-size="17.1" textLength="24.1" lengthAdjust="spacingAndGlyphs">76,58</text>
<text x="1394.6" y="811.0" font-size="17.1" textLength="24.1" lengthAdjust="spacingAndGlyphs">93,40</text>
<text x="1440.1" y="811.0" font-size="17.1" textLength="30.0" lengthAdjust="spacingAndGlyphs">282,14</text>
<text x="1494.9" y="811.0" font-size="17.1" textLength="24.1" lengthAdjust="spacingAndGlyphs">32,34</text>
<text x="1543.3" y="811.0" font-size="17.1" textLength="30.0" lengthAdjust="spacingAndGlyphs">314,48</text>
<text x="1593.1" y="811.0" font-size="17.1" textLength="30.0" lengthAdjust="spacingAndGlyphs">125,73</text>
<text x="1659.3" y="811.0" font-size="17.1" textLength="30.0" lengthAdjust="spacingAndGlyphs">375,54</text>
<text x="339.0" y="837.6" font-size="17.1" textLength="36.3" lengthAdjust="spacingAndGlyphs">ΔE 2000</text>
<text x="407.1" y="837.6" font-size="17.1" textLength="18.2" lengthAdjust="spacingAndGlyphs">4,07</text>
<text x="442.3" y="837.6" font-size="17.1" textLength="18.2" lengthAdjust="spacingAndGlyphs">4,06</text>
<text x="478.9" y="837.6" font-size="17.1" textLength="18.2" lengthAdjust="spacingAndGlyphs">3,98</text>
<text x="515.5" y="837.6" font-size="17.1" textLength="18.2" lengthAdjust="spacingAndGlyphs">3,81</text>
<text x="551.9" y="837.6" font-size="17.1" textLength="18.2" lengthAdjust="spacingAndGlyphs">3,30</text>
<text x="588.3" y="837.6" font-size="17.1" textLength="18.2" lengthAdjust="spacingAndGlyphs">0,00</text>
<text x="615.1" y="837.6" font-size="17.1" textLength="18.2" lengthAdjust="spacingAndGlyphs">2,87</text>
<text x="658.4" y="837.6" font-size="17.1" textLength="18.2" lengthAdjust="spacingAndGlyphs">2,70</text>
<text x="702.3" y="837.6" font-size="17.1" textLength="18.2" lengthAdjust="spacingAndGlyphs">2,30</text>
<text x="741.5" y="837.6" font-size="17.1" textLength="18.2" lengthAdjust="spacingAndGlyphs">0,95</text>
<text x="775.6" y="837.6" font-size="17.1" textLength="18.2" lengthAdjust="spacingAndGlyphs">1,51</text>
<text x="829.4" y="837.6" font-size="17.1" textLength="18.2" lengthAdjust="spacingAndGlyphs">2,81</text>
<text x="886.4" y="837.6" font-size="17.1" textLength="18.2" lengthAdjust="spacingAndGlyphs">1,44</text>
<text x="921.6" y="837.6" font-size="17.1" textLength="18.2" lengthAdjust="spacingAndGlyphs">3,06</text>
<text x="980.3" y="837.6" font-size="17.1" textLength="18.2" lengthAdjust="spacingAndGlyphs">1,43</text>
<text x="1043.8" y="837.6" font-size="17.1" textLength="18.2" lengthAdjust="spacingAndGlyphs">2,47</text>
<text x="1075.7" y="837.6" font-size="17.1" textLength="18.2" lengthAdjust="spacingAndGlyphs">0,78</text>
<text x="1134.4" y="837.6" font-size="17.1" textLength="18.2" lengthAdjust="spacingAndGlyphs">1,96</text>
<text x="1197.9" y="837.6" font-size="17.1" textLength="18.2" lengthAdjust="spacingAndGlyphs">2,92</text>
<text x="1227.8" y="837.6" font-size="17.1" textLength="18.2" lengthAdjust="spacingAndGlyphs">1,45</text>
<text x="1258.1" y="837.6" font-size="17.1" textLength="18.2" lengthAdjust="spacingAndGlyphs">1,74</text>
<text x="1287.8" y="837.6" font-size="17.1" textLength="18.2" lengthAdjust="spacingAndGlyphs">1,95</text>
<text x="1323.3" y="837.6" font-size="17.1" textLength="18.2" lengthAdjust="spacingAndGlyphs">1,37</text>
<text x="1364.7" y="837.6" font-size="17.1" textLength="18.2" lengthAdjust="spacingAndGlyphs">2,86</text>
<text x="1394.6" y="837.6" font-size="17.1" textLength="18.2" lengthAdjust="spacingAndGlyphs">2,70</text>
<text x="1440.1" y="837.6" font-size="17.1" textLength="18.2" lengthAdjust="spacingAndGlyphs">2,00</text>
<text x="1494.9" y="837.6" font-size="17.1" textLength="18.2" lengthAdjust="spacingAndGlyphs">2,31</text>
<text x="1543.3" y="837.6" font-size="17.1" textLength="18.2" lengthAdjust="spacingAndGlyphs">3,07</text>
<text x="1593.1" y="837.6" font-size="17.1" textLength="18.2" lengthAdjust="spacingAndGlyphs">1,45</text>
<text x="1659.3" y="837.6" font-size="17.1" textLength="18.2" lengthAdjust="spacingAndGlyphs">1,15</text>
</g>
</svg>
</body></html>
